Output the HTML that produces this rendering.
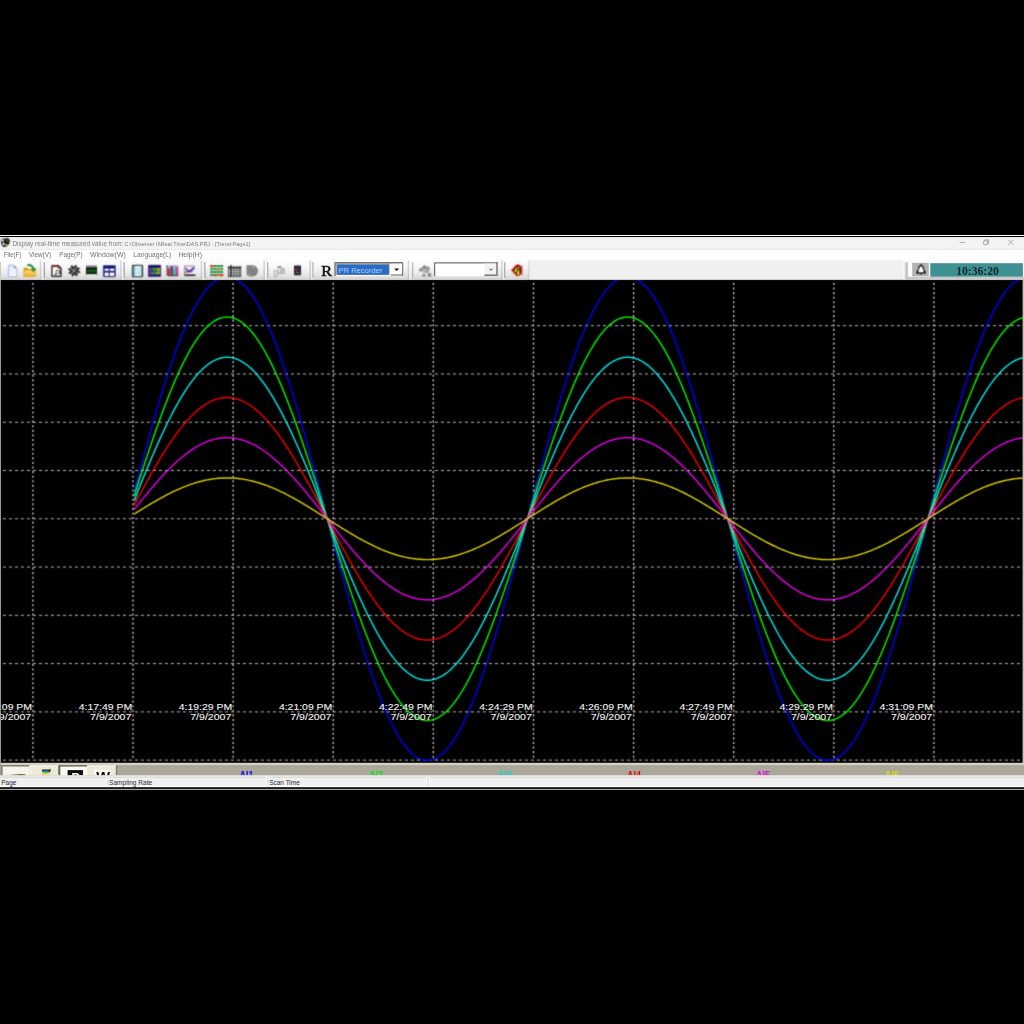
<!DOCTYPE html>
<html><head><meta charset="utf-8"><title>Trend</title>
<style>
html,body{margin:0;padding:0;background:#000;}
body{width:1024px;height:1024px;position:relative;overflow:hidden;font-family:"Liberation Sans",sans-serif;}
svg text{white-space:pre;}
</style></head><body>
<svg width="1024" height="483" viewBox="0 280 1024 483" style="position:absolute;left:0;top:280px;display:block">
<rect x="0" y="280" width="1024" height="483" fill="#000"/>
<defs><filter id="cb" x="0" y="270" width="1024" height="500" filterUnits="userSpaceOnUse"><feConvolveMatrix order="3" kernelMatrix="1 4 1 4 20 4 1 4 1" divisor="40" edgeMode="none" preserveAlpha="false"/></filter><clipPath id="cc"><rect x="0" y="280" width="1024" height="483"/></clipPath></defs>
<g clip-path="url(#cc)"><g filter="url(#cb)">
<g stroke="#c6c6c6" fill="none"><line stroke-width="0.9" x1="2.9" y1="325.70" x2="1024" y2="325.70" stroke-dasharray="3.1 2.9"/><line stroke-width="0.9" x1="2.9" y1="373.97" x2="1024" y2="373.97" stroke-dasharray="3.1 2.9"/><line stroke-width="0.9" x1="2.9" y1="422.24" x2="1024" y2="422.24" stroke-dasharray="3.1 2.9"/><line stroke-width="0.9" x1="2.9" y1="470.51" x2="1024" y2="470.51" stroke-dasharray="3.1 2.9"/><line stroke-width="0.9" x1="2.9" y1="518.78" x2="1024" y2="518.78" stroke-dasharray="3.1 2.9"/><line stroke-width="0.9" x1="2.9" y1="567.05" x2="1024" y2="567.05" stroke-dasharray="3.1 2.9"/><line stroke-width="0.9" x1="2.9" y1="615.32" x2="1024" y2="615.32" stroke-dasharray="3.1 2.9"/><line stroke-width="0.9" x1="2.9" y1="663.59" x2="1024" y2="663.59" stroke-dasharray="3.1 2.9"/><line stroke-width="0.9" x1="2.9" y1="711.86" x2="1024" y2="711.86" stroke-dasharray="3.1 2.9"/><line stroke-width="0.9" x1="2.9" y1="760.13" x2="1024" y2="760.13" stroke-dasharray="3.1 2.9"/><line stroke="#c4c4c4" stroke-width="1.35" x1="32.9" y1="282.9" x2="32.9" y2="758.6" stroke-dasharray="2.1 2.49"/><line stroke="#c4c4c4" stroke-width="1.35" x1="133.0" y1="282.9" x2="133.0" y2="758.6" stroke-dasharray="2.1 2.49"/><line stroke="#c4c4c4" stroke-width="1.35" x1="233.1" y1="282.9" x2="233.1" y2="758.6" stroke-dasharray="2.1 2.49"/><line stroke="#c4c4c4" stroke-width="1.35" x1="333.2" y1="282.9" x2="333.2" y2="758.6" stroke-dasharray="2.1 2.49"/><line stroke="#c4c4c4" stroke-width="1.35" x1="433.3" y1="282.9" x2="433.3" y2="758.6" stroke-dasharray="2.1 2.49"/><line stroke="#c4c4c4" stroke-width="1.35" x1="533.5" y1="282.9" x2="533.5" y2="758.6" stroke-dasharray="2.1 2.49"/><line stroke="#c4c4c4" stroke-width="1.35" x1="633.6" y1="282.9" x2="633.6" y2="758.6" stroke-dasharray="2.1 2.49"/><line stroke="#c4c4c4" stroke-width="1.35" x1="733.7" y1="282.9" x2="733.7" y2="758.6" stroke-dasharray="2.1 2.49"/><line stroke="#c4c4c4" stroke-width="1.35" x1="833.8" y1="282.9" x2="833.8" y2="758.6" stroke-dasharray="2.1 2.49"/><line stroke="#c4c4c4" stroke-width="1.35" x1="933.9" y1="282.9" x2="933.9" y2="758.6" stroke-dasharray="2.1 2.49"/></g>
<polyline fill="none" stroke="#0000f6" stroke-width="1.45" stroke-linejoin="round" points="134.2,491.5 135.2,487.7 136.2,484.0 137.2,480.2 138.2,476.5 139.2,472.7 140.2,469.0 141.2,465.3 142.2,461.6 143.2,457.9 144.2,454.3 145.2,450.6 146.2,447.0 147.2,443.4 148.2,439.8 149.2,436.2 150.2,432.6 151.2,429.1 152.2,425.6 153.2,422.1 154.2,418.6 155.2,415.2 156.2,411.8 157.2,408.4 158.2,405.0 159.2,401.7 160.2,398.4 161.2,395.1 162.2,391.8 163.2,388.6 164.2,385.4 165.2,382.3 166.2,379.2 167.2,376.1 168.2,373.0 169.2,370.0 170.2,367.1 171.2,364.1 172.2,361.2 173.2,358.4 174.2,355.5 175.2,352.8 176.2,350.0 177.2,347.3 178.2,344.7 179.2,342.0 180.2,339.5 181.2,336.9 182.2,334.5 183.2,332.0 184.2,329.6 185.2,327.3 186.2,325.0 187.2,322.8 188.2,320.6 189.2,318.4 190.2,316.3 191.2,314.2 192.2,312.2 193.2,310.3 194.2,308.4 195.2,306.5 196.2,304.8 197.2,303.0 198.2,301.3 199.2,299.7 200.2,298.1 201.2,296.6 202.2,295.1 203.2,293.7 204.2,292.3 205.2,291.0 206.2,289.8 207.2,288.6 208.2,287.4 209.2,286.3 210.2,285.3 211.2,284.4 212.2,283.4 213.2,282.6 214.2,281.8 215.2,281.1 216.2,280.4 217.2,279.8 218.2,279.2 219.2,278.7 220.2,278.3 221.2,277.9 222.2,277.6 223.2,277.3 224.2,277.1 225.2,277.0 226.2,276.9 227.2,276.9 228.2,276.9 229.2,277.0 230.2,277.1 231.2,277.3 232.2,277.6 233.2,278.0 234.2,278.3 235.2,278.8 236.2,279.3 237.2,279.9 238.2,280.5 239.2,281.2 240.2,281.9 241.2,282.7 242.2,283.6 243.2,284.5 244.2,285.5 245.2,286.5 246.2,287.6 247.2,288.8 248.2,290.0 249.2,291.2 250.2,292.5 251.2,293.9 252.2,295.3 253.2,296.8 254.2,298.4 255.2,300.0 256.2,301.6 257.2,303.3 258.2,305.1 259.2,306.9 260.2,308.7 261.2,310.6 262.2,312.6 263.2,314.6 264.2,316.7 265.2,318.8 266.2,320.9 267.2,323.1 268.2,325.4 269.2,327.7 270.2,330.1 271.2,332.5 272.2,334.9 273.2,337.4 274.2,339.9 275.2,342.5 276.2,345.1 277.2,347.8 278.2,350.5 279.2,353.2 280.2,356.0 281.2,358.9 282.2,361.7 283.2,364.6 284.2,367.6 285.2,370.6 286.2,373.6 287.2,376.6 288.2,379.7 289.2,382.8 290.2,386.0 291.2,389.2 292.2,392.4 293.2,395.7 294.2,398.9 295.2,402.3 296.2,405.6 297.2,409.0 298.2,412.4 299.2,415.8 300.2,419.2 301.2,422.7 302.2,426.2 303.2,429.7 304.2,433.2 305.2,436.8 306.2,440.4 307.2,444.0 308.2,447.6 309.2,451.2 310.2,454.9 311.2,458.6 312.2,462.2 313.2,465.9 314.2,469.7 315.2,473.4 316.2,477.1 317.2,480.9 318.2,484.6 319.2,488.4 320.2,492.1 321.2,495.9 322.2,499.7 323.2,503.5 324.2,507.3 325.2,511.1 326.2,514.9 327.2,518.7 328.2,522.5 329.2,526.2 330.2,530.0 331.2,533.8 332.2,537.6 333.2,541.4 334.2,545.2 335.2,548.9 336.2,552.7 337.2,556.5 338.2,560.2 339.2,563.9 340.2,567.7 341.2,571.4 342.2,575.1 343.2,578.7 344.2,582.4 345.2,586.1 346.2,589.7 347.2,593.3 348.2,596.9 349.2,600.5 350.2,604.1 351.2,607.6 352.2,611.1 353.2,614.6 354.2,618.1 355.2,621.6 356.2,625.0 357.2,628.4 358.2,631.7 359.2,635.1 360.2,638.4 361.2,641.7 362.2,644.9 363.2,648.2 364.2,651.3 365.2,654.5 366.2,657.6 367.2,660.7 368.2,663.8 369.2,666.8 370.2,669.8 371.2,672.7 372.2,675.6 373.2,678.5 374.2,681.3 375.2,684.1 376.2,686.9 377.2,689.6 378.2,692.2 379.2,694.9 380.2,697.5 381.2,700.0 382.2,702.5 383.2,704.9 384.2,707.3 385.2,709.7 386.2,712.0 387.2,714.2 388.2,716.5 389.2,718.6 390.2,720.7 391.2,722.8 392.2,724.8 393.2,726.8 394.2,728.7 395.2,730.5 396.2,732.4 397.2,734.1 398.2,735.8 399.2,737.5 400.2,739.1 401.2,740.6 402.2,742.1 403.2,743.5 404.2,744.9 405.2,746.2 406.2,747.5 407.2,748.7 408.2,749.8 409.2,750.9 410.2,752.0 411.2,752.9 412.2,753.9 413.2,754.7 414.2,755.5 415.2,756.3 416.2,757.0 417.2,757.6 418.2,758.2 419.2,758.7 420.2,759.1 421.2,759.5 422.2,759.9 423.2,760.0 424.2,760.0 425.2,760.0 426.2,760.0 427.2,760.0 428.2,760.0 429.2,760.0 430.2,760.0 431.2,760.0 432.2,759.9 433.2,759.6 434.2,759.2 435.2,758.8 436.2,758.3 437.2,757.8 438.2,757.1 439.2,756.5 440.2,755.7 441.2,755.0 442.2,754.1 443.2,753.2 444.2,752.2 445.2,751.2 446.2,750.1 447.2,749.0 448.2,747.8 449.2,746.6 450.2,745.3 451.2,743.9 452.2,742.5 453.2,741.0 454.2,739.5 455.2,737.9 456.2,736.3 457.2,734.6 458.2,732.8 459.2,731.0 460.2,729.2 461.2,727.3 462.2,725.4 463.2,723.4 464.2,721.3 465.2,719.2 466.2,717.1 467.2,714.9 468.2,712.6 469.2,710.3 470.2,708.0 471.2,705.6 472.2,703.2 473.2,700.7 474.2,698.2 475.2,695.6 476.2,693.0 477.2,690.3 478.2,687.6 479.2,684.9 480.2,682.1 481.2,679.3 482.2,676.4 483.2,673.5 484.2,670.6 485.2,667.6 486.2,664.6 487.2,661.6 488.2,658.5 489.2,655.4 490.2,652.2 491.2,649.0 492.2,645.8 493.2,642.6 494.2,639.3 495.2,636.0 496.2,632.7 497.2,629.3 498.2,625.9 499.2,622.5 500.2,619.1 501.2,615.6 502.2,612.1 503.2,608.6 504.2,605.1 505.2,601.5 506.2,597.9 507.2,594.3 508.2,590.7 509.2,587.1 510.2,583.4 511.2,579.8 512.2,576.1 513.2,572.4 514.2,568.7 515.2,565.0 516.2,561.2 517.2,557.5 518.2,553.7 519.2,550.0 520.2,546.2 521.2,542.4 522.2,538.7 523.2,534.9 524.2,531.1 525.2,527.3 526.2,523.5 527.2,519.7 528.2,515.9 529.2,512.1 530.2,508.3 531.2,504.5 532.2,500.7 533.2,497.0 534.2,493.2 535.2,489.4 536.2,485.6 537.2,481.9 538.2,478.1 539.2,474.4 540.2,470.7 541.2,467.0 542.2,463.3 543.2,459.6 544.2,455.9 545.2,452.2 546.2,448.6 547.2,445.0 548.2,441.4 549.2,437.8 550.2,434.2 551.2,430.7 552.2,427.2 553.2,423.7 554.2,420.2 555.2,416.7 556.2,413.3 557.2,409.9 558.2,406.5 559.2,403.2 560.2,399.8 561.2,396.6 562.2,393.3 563.2,390.1 564.2,386.9 565.2,383.7 566.2,380.6 567.2,377.5 568.2,374.4 569.2,371.4 570.2,368.4 571.2,365.4 572.2,362.5 573.2,359.6 574.2,356.8 575.2,354.0 576.2,351.2 577.2,348.5 578.2,345.8 579.2,343.2 580.2,340.6 581.2,338.1 582.2,335.6 583.2,333.1 584.2,330.7 585.2,328.3 586.2,326.0 587.2,323.8 588.2,321.5 589.2,319.4 590.2,317.2 591.2,315.2 592.2,313.1 593.2,311.2 594.2,309.2 595.2,307.4 596.2,305.6 597.2,303.8 598.2,302.1 599.2,300.4 600.2,298.8 601.2,297.3 602.2,295.8 603.2,294.3 604.2,292.9 605.2,291.6 606.2,290.3 607.2,289.1 608.2,287.9 609.2,286.8 610.2,285.8 611.2,284.8 612.2,283.8 613.2,283.0 614.2,282.1 615.2,281.4 616.2,280.7 617.2,280.0 618.2,279.5 619.2,278.9 620.2,278.5 621.2,278.1 622.2,277.7 623.2,277.4 624.2,277.2 625.2,277.0 626.2,276.9 627.2,276.9 628.2,276.9 629.2,276.9 630.2,277.1 631.2,277.2 632.2,277.5 633.2,277.8 634.2,278.2 635.2,278.6 636.2,279.1 637.2,279.6 638.2,280.2 639.2,280.9 640.2,281.6 641.2,282.4 642.2,283.2 643.2,284.1 644.2,285.0 645.2,286.1 646.2,287.1 647.2,288.2 648.2,289.4 649.2,290.7 650.2,291.9 651.2,293.3 652.2,294.7 653.2,296.2 654.2,297.7 655.2,299.2 656.2,300.9 657.2,302.5 658.2,304.3 659.2,306.0 660.2,307.9 661.2,309.8 662.2,311.7 663.2,313.7 664.2,315.7 665.2,317.8 666.2,320.0 667.2,322.1 668.2,324.4 669.2,326.7 670.2,329.0 671.2,331.4 672.2,333.8 673.2,336.3 674.2,338.8 675.2,341.3 676.2,343.9 677.2,346.6 678.2,349.3 679.2,352.0 680.2,354.8 681.2,357.6 682.2,360.4 683.2,363.3 684.2,366.2 685.2,369.2 686.2,372.2 687.2,375.2 688.2,378.3 689.2,381.4 690.2,384.6 691.2,387.7 692.2,391.0 693.2,394.2 694.2,397.5 695.2,400.8 696.2,404.1 697.2,407.4 698.2,410.8 699.2,414.2 700.2,417.7 701.2,421.1 702.2,424.6 703.2,428.1 704.2,431.7 705.2,435.2 706.2,438.8 707.2,442.4 708.2,446.0 709.2,449.6 710.2,453.3 711.2,456.9 712.2,460.6 713.2,464.3 714.2,468.0 715.2,471.7 716.2,475.4 717.2,479.2 718.2,482.9 719.2,486.7 720.2,490.4 721.2,494.2 722.2,498.0 723.2,501.8 724.2,505.6 725.2,509.4 726.2,513.2 727.2,516.9 728.2,520.7 729.2,524.5 730.2,528.3 731.2,532.1 732.2,535.9 733.2,539.7 734.2,543.5 735.2,547.2 736.2,551.0 737.2,554.8 738.2,558.5 739.2,562.3 740.2,566.0 741.2,569.7 742.2,573.4 743.2,577.1 744.2,580.8 745.2,584.4 746.2,588.1 747.2,591.7 748.2,595.3 749.2,598.9 750.2,602.5 751.2,606.0 752.2,609.6 753.2,613.1 754.2,616.5 755.2,620.0 756.2,623.4 757.2,626.8 758.2,630.2 759.2,633.6 760.2,636.9 761.2,640.2 762.2,643.5 763.2,646.7 764.2,649.9 765.2,653.1 766.2,656.2 767.2,659.3 768.2,662.4 769.2,665.4 770.2,668.4 771.2,671.4 772.2,674.3 773.2,677.2 774.2,680.1 775.2,682.9 776.2,685.6 777.2,688.4 778.2,691.1 779.2,693.7 780.2,696.3 781.2,698.9 782.2,701.4 783.2,703.8 784.2,706.2 785.2,708.6 786.2,711.0 787.2,713.2 788.2,715.5 789.2,717.7 790.2,719.8 791.2,721.9 792.2,723.9 793.2,725.9 794.2,727.8 795.2,729.7 796.2,731.5 797.2,733.3 798.2,735.0 799.2,736.7 800.2,738.3 801.2,739.9 802.2,741.4 803.2,742.9 804.2,744.3 805.2,745.6 806.2,746.9 807.2,748.1 808.2,749.3 809.2,750.4 810.2,751.5 811.2,752.5 812.2,753.5 813.2,754.3 814.2,755.2 815.2,755.9 816.2,756.7 817.2,757.3 818.2,757.9 819.2,758.5 820.2,758.9 821.2,759.4 822.2,759.7 823.2,760.0 824.2,760.0 825.2,760.0 826.2,760.0 827.2,760.0 828.2,760.0 829.2,760.0 830.2,760.0 831.2,760.0 832.2,760.0 833.2,759.8 834.2,759.4 835.2,759.0 836.2,758.5 837.2,758.0 838.2,757.4 839.2,756.8 840.2,756.1 841.2,755.3 842.2,754.5 843.2,753.6 844.2,752.7 845.2,751.7 846.2,750.6 847.2,749.5 848.2,748.3 849.2,747.1 850.2,745.8 851.2,744.5 852.2,743.1 853.2,741.7 854.2,740.2 855.2,738.6 856.2,737.0 857.2,735.3 858.2,733.6 859.2,731.9 860.2,730.0 861.2,728.2 862.2,726.2 863.2,724.3 864.2,722.2 865.2,720.2 866.2,718.0 867.2,715.9 868.2,713.6 869.2,711.4 870.2,709.0 871.2,706.7 872.2,704.3 873.2,701.8 874.2,699.3 875.2,696.7 876.2,694.2 877.2,691.5 878.2,688.8 879.2,686.1 880.2,683.4 881.2,680.6 882.2,677.7 883.2,674.8 884.2,671.9 885.2,669.0 886.2,666.0 887.2,662.9 888.2,659.9 889.2,656.8 890.2,653.6 891.2,650.5 892.2,647.3 893.2,644.0 894.2,640.8 895.2,637.5 896.2,634.2 897.2,630.8 898.2,627.4 899.2,624.0 900.2,620.6 901.2,617.2 902.2,613.7 903.2,610.2 904.2,606.6 905.2,603.1 906.2,599.5 907.2,595.9 908.2,592.3 909.2,588.7 910.2,585.1 911.2,581.4 912.2,577.7 913.2,574.1 914.2,570.3 915.2,566.6 916.2,562.9 917.2,559.2 918.2,555.4 919.2,551.7 920.2,547.9 921.2,544.1 922.2,540.4 923.2,536.6 924.2,532.8 925.2,529.0 926.2,525.2 927.2,521.4 928.2,517.6 929.2,513.8 930.2,510.0 931.2,506.2 932.2,502.4 933.2,498.7 934.2,494.9 935.2,491.1 936.2,487.3 937.2,483.6 938.2,479.8 939.2,476.1 940.2,472.4 941.2,468.6 942.2,464.9 943.2,461.2 944.2,457.6 945.2,453.9 946.2,450.2 947.2,446.6 948.2,443.0 949.2,439.4 950.2,435.8 951.2,432.3 952.2,428.7 953.2,425.2 954.2,421.7 955.2,418.3 956.2,414.8 957.2,411.4 958.2,408.0 959.2,404.7 960.2,401.3 961.2,398.0 962.2,394.8 963.2,391.5 964.2,388.3 965.2,385.1 966.2,382.0 967.2,378.9 968.2,375.8 969.2,372.7 970.2,369.7 971.2,366.8 972.2,363.8 973.2,360.9 974.2,358.1 975.2,355.3 976.2,352.5 977.2,349.7 978.2,347.0 979.2,344.4 980.2,341.8 981.2,339.2 982.2,336.7 983.2,334.2 984.2,331.8 985.2,329.4 986.2,327.1 987.2,324.8 988.2,322.5 989.2,320.3 990.2,318.2 991.2,316.1 992.2,314.0 993.2,312.0 994.2,310.1 995.2,308.2 996.2,306.4 997.2,304.6 998.2,302.8 999.2,301.2 1000.2,299.5 1001.2,297.9 1002.2,296.4 1003.2,295.0 1004.2,293.5 1005.2,292.2 1006.2,290.9 1007.2,289.6 1008.2,288.4 1009.2,287.3 1010.2,286.2 1011.2,285.2 1012.2,284.3 1013.2,283.4 1014.2,282.5 1015.2,281.7 1016.2,281.0 1017.2,280.3 1018.2,279.7 1019.2,279.2 1020.2,278.7 1021.2,278.2 1022.2,277.9 1023.2,277.5 1024.2,277.3"/>
<polyline fill="none" stroke="#00f400" stroke-width="1.45" stroke-linejoin="round" points="134.2,496.0 135.2,492.9 136.2,489.7 137.2,486.6 138.2,483.5 139.2,480.4 140.2,477.3 141.2,474.2 142.2,471.1 143.2,468.0 144.2,465.0 145.2,461.9 146.2,458.9 147.2,455.9 148.2,452.9 149.2,449.9 150.2,446.9 151.2,444.0 152.2,441.1 153.2,438.1 154.2,435.2 155.2,432.4 156.2,429.5 157.2,426.7 158.2,423.9 159.2,421.1 160.2,418.4 161.2,415.6 162.2,412.9 163.2,410.2 164.2,407.6 165.2,405.0 166.2,402.4 167.2,399.8 168.2,397.2 169.2,394.7 170.2,392.2 171.2,389.8 172.2,387.4 173.2,385.0 174.2,382.6 175.2,380.3 176.2,378.0 177.2,375.8 178.2,373.6 179.2,371.4 180.2,369.2 181.2,367.1 182.2,365.1 183.2,363.0 184.2,361.0 185.2,359.1 186.2,357.2 187.2,355.3 188.2,353.5 189.2,351.7 190.2,349.9 191.2,348.2 192.2,346.5 193.2,344.9 194.2,343.3 195.2,341.8 196.2,340.3 197.2,338.8 198.2,337.4 199.2,336.1 200.2,334.7 201.2,333.5 202.2,332.2 203.2,331.1 204.2,329.9 205.2,328.8 206.2,327.8 207.2,326.8 208.2,325.8 209.2,324.9 210.2,324.1 211.2,323.3 212.2,322.5 213.2,321.8 214.2,321.2 215.2,320.5 216.2,320.0 217.2,319.5 218.2,319.0 219.2,318.6 220.2,318.2 221.2,317.9 222.2,317.6 223.2,317.4 224.2,317.2 225.2,317.1 226.2,317.0 227.2,317.0 228.2,317.1 229.2,317.1 230.2,317.3 231.2,317.4 232.2,317.7 233.2,317.9 234.2,318.3 235.2,318.6 236.2,319.1 237.2,319.5 238.2,320.1 239.2,320.6 240.2,321.3 241.2,321.9 242.2,322.7 243.2,323.4 244.2,324.2 245.2,325.1 246.2,326.0 247.2,327.0 248.2,328.0 249.2,329.0 250.2,330.1 251.2,331.3 252.2,332.5 253.2,333.7 254.2,335.0 255.2,336.3 256.2,337.7 257.2,339.1 258.2,340.6 259.2,342.1 260.2,343.6 261.2,345.2 262.2,346.8 263.2,348.5 264.2,350.2 265.2,352.0 266.2,353.8 267.2,355.6 268.2,357.5 269.2,359.4 270.2,361.4 271.2,363.4 272.2,365.4 273.2,367.5 274.2,369.6 275.2,371.8 276.2,374.0 277.2,376.2 278.2,378.4 279.2,380.7 280.2,383.1 281.2,385.4 282.2,387.8 283.2,390.2 284.2,392.7 285.2,395.2 286.2,397.7 287.2,400.2 288.2,402.8 289.2,405.4 290.2,408.0 291.2,410.7 292.2,413.4 293.2,416.1 294.2,418.8 295.2,421.6 296.2,424.4 297.2,427.2 298.2,430.0 299.2,432.9 300.2,435.8 301.2,438.6 302.2,441.6 303.2,444.5 304.2,447.4 305.2,450.4 306.2,453.4 307.2,456.4 308.2,459.4 309.2,462.5 310.2,465.5 311.2,468.6 312.2,471.6 313.2,474.7 314.2,477.8 315.2,480.9 316.2,484.0 317.2,487.2 318.2,490.3 319.2,493.4 320.2,496.6 321.2,499.7 322.2,502.9 323.2,506.0 324.2,509.2 325.2,512.3 326.2,515.5 327.2,518.7 328.2,521.8 329.2,525.0 330.2,528.2 331.2,531.3 332.2,534.5 333.2,537.6 334.2,540.8 335.2,543.9 336.2,547.1 337.2,550.2 338.2,553.3 339.2,556.4 340.2,559.5 341.2,562.6 342.2,565.7 343.2,568.8 344.2,571.8 345.2,574.9 346.2,577.9 347.2,580.9 348.2,583.9 349.2,586.9 350.2,589.9 351.2,592.9 352.2,595.8 353.2,598.7 354.2,601.6 355.2,604.5 356.2,607.3 357.2,610.2 358.2,613.0 359.2,615.8 360.2,618.5 361.2,621.3 362.2,624.0 363.2,626.7 364.2,629.3 365.2,632.0 366.2,634.6 367.2,637.1 368.2,639.7 369.2,642.2 370.2,644.7 371.2,647.2 372.2,649.6 373.2,652.0 374.2,654.3 375.2,656.7 376.2,659.0 377.2,661.2 378.2,663.4 379.2,665.6 380.2,667.8 381.2,669.9 382.2,672.0 383.2,674.0 384.2,676.0 385.2,678.0 386.2,679.9 387.2,681.8 388.2,683.6 389.2,685.4 390.2,687.2 391.2,688.9 392.2,690.6 393.2,692.2 394.2,693.8 395.2,695.4 396.2,696.9 397.2,698.3 398.2,699.8 399.2,701.1 400.2,702.5 401.2,703.7 402.2,705.0 403.2,706.2 404.2,707.3 405.2,708.4 406.2,709.5 407.2,710.5 408.2,711.4 409.2,712.4 410.2,713.2 411.2,714.0 412.2,714.8 413.2,715.5 414.2,716.2 415.2,716.8 416.2,717.4 417.2,717.9 418.2,718.4 419.2,718.8 420.2,719.2 421.2,719.5 422.2,719.8 423.2,720.1 424.2,720.2 425.2,720.4 426.2,720.4 427.2,720.5 428.2,720.5 429.2,720.4 430.2,720.3 431.2,720.1 432.2,719.9 433.2,719.6 434.2,719.3 435.2,718.9 436.2,718.5 437.2,718.1 438.2,717.6 439.2,717.0 440.2,716.4 441.2,715.7 442.2,715.0 443.2,714.3 444.2,713.5 445.2,712.6 446.2,711.7 447.2,710.8 448.2,709.8 449.2,708.7 450.2,707.6 451.2,706.5 452.2,705.3 453.2,704.1 454.2,702.8 455.2,701.5 456.2,700.1 457.2,698.7 458.2,697.3 459.2,695.8 460.2,694.2 461.2,692.7 462.2,691.0 463.2,689.4 464.2,687.7 465.2,685.9 466.2,684.1 467.2,682.3 468.2,680.4 469.2,678.5 470.2,676.5 471.2,674.6 472.2,672.5 473.2,670.5 474.2,668.4 475.2,666.2 476.2,664.0 477.2,661.8 478.2,659.6 479.2,657.3 480.2,655.0 481.2,652.6 482.2,650.2 483.2,647.8 484.2,645.4 485.2,642.9 486.2,640.4 487.2,637.8 488.2,635.3 489.2,632.7 490.2,630.1 491.2,627.4 492.2,624.7 493.2,622.0 494.2,619.3 495.2,616.5 496.2,613.7 497.2,610.9 498.2,608.1 499.2,605.3 500.2,602.4 501.2,599.5 502.2,596.6 503.2,593.7 504.2,590.7 505.2,587.8 506.2,584.8 507.2,581.8 508.2,578.8 509.2,575.7 510.2,572.7 511.2,569.6 512.2,566.6 513.2,563.5 514.2,560.4 515.2,557.3 516.2,554.2 517.2,551.1 518.2,547.9 519.2,544.8 520.2,541.6 521.2,538.5 522.2,535.3 523.2,532.2 524.2,529.0 525.2,525.9 526.2,522.7 527.2,519.5 528.2,516.4 529.2,513.2 530.2,510.0 531.2,506.9 532.2,503.7 533.2,500.6 534.2,497.4 535.2,494.3 536.2,491.1 537.2,488.0 538.2,484.9 539.2,481.8 540.2,478.7 541.2,475.6 542.2,472.5 543.2,469.4 544.2,466.3 545.2,463.3 546.2,460.3 547.2,457.2 548.2,454.2 549.2,451.2 550.2,448.3 551.2,445.3 552.2,442.4 553.2,439.4 554.2,436.5 555.2,433.7 556.2,430.8 557.2,428.0 558.2,425.2 559.2,422.4 560.2,419.6 561.2,416.8 562.2,414.1 563.2,411.4 564.2,408.8 565.2,406.1 566.2,403.5 567.2,400.9 568.2,398.4 569.2,395.9 570.2,393.4 571.2,390.9 572.2,388.5 573.2,386.1 574.2,383.7 575.2,381.4 576.2,379.1 577.2,376.8 578.2,374.6 579.2,372.4 580.2,370.2 581.2,368.1 582.2,366.0 583.2,364.0 584.2,361.9 585.2,360.0 586.2,358.0 587.2,356.1 588.2,354.3 589.2,352.5 590.2,350.7 591.2,349.0 592.2,347.3 593.2,345.6 594.2,344.0 595.2,342.5 596.2,341.0 597.2,339.5 598.2,338.1 599.2,336.7 600.2,335.3 601.2,334.0 602.2,332.8 603.2,331.6 604.2,330.4 605.2,329.3 606.2,328.3 607.2,327.2 608.2,326.3 609.2,325.3 610.2,324.5 611.2,323.6 612.2,322.9 613.2,322.1 614.2,321.4 615.2,320.8 616.2,320.2 617.2,319.7 618.2,319.2 619.2,318.8 620.2,318.4 621.2,318.0 622.2,317.7 623.2,317.5 624.2,317.3 625.2,317.2 626.2,317.1 627.2,317.0 628.2,317.0 629.2,317.1 630.2,317.2 631.2,317.4 632.2,317.6 633.2,317.8 634.2,318.1 635.2,318.5 636.2,318.9 637.2,319.3 638.2,319.8 639.2,320.4 640.2,321.0 641.2,321.6 642.2,322.3 643.2,323.1 644.2,323.9 645.2,324.7 646.2,325.6 647.2,326.5 648.2,327.5 649.2,328.5 650.2,329.6 651.2,330.7 652.2,331.9 653.2,333.1 654.2,334.4 655.2,335.7 656.2,337.0 657.2,338.4 658.2,339.9 659.2,341.4 660.2,342.9 661.2,344.5 662.2,346.1 663.2,347.7 664.2,349.4 665.2,351.2 666.2,353.0 667.2,354.8 668.2,356.7 669.2,358.6 670.2,360.5 671.2,362.5 672.2,364.5 673.2,366.6 674.2,368.7 675.2,370.8 676.2,373.0 677.2,375.2 678.2,377.4 679.2,379.7 680.2,382.0 681.2,384.3 682.2,386.7 683.2,389.1 684.2,391.6 685.2,394.0 686.2,396.5 687.2,399.1 688.2,401.6 689.2,404.2 690.2,406.9 691.2,409.5 692.2,412.2 693.2,414.9 694.2,417.6 695.2,420.4 696.2,423.1 697.2,425.9 698.2,428.7 699.2,431.6 700.2,434.5 701.2,437.3 702.2,440.2 703.2,443.2 704.2,446.1 705.2,449.1 706.2,452.1 707.2,455.1 708.2,458.1 709.2,461.1 710.2,464.1 711.2,467.2 712.2,470.2 713.2,473.3 714.2,476.4 715.2,479.5 716.2,482.6 717.2,485.7 718.2,488.9 719.2,492.0 720.2,495.1 721.2,498.3 722.2,501.4 723.2,504.6 724.2,507.8 725.2,510.9 726.2,514.1 727.2,517.2 728.2,520.4 729.2,523.6 730.2,526.7 731.2,529.9 732.2,533.1 733.2,536.2 734.2,539.4 735.2,542.5 736.2,545.7 737.2,548.8 738.2,551.9 739.2,555.0 740.2,558.1 741.2,561.2 742.2,564.3 743.2,567.4 744.2,570.5 745.2,573.5 746.2,576.6 747.2,579.6 748.2,582.6 749.2,585.6 750.2,588.6 751.2,591.5 752.2,594.5 753.2,597.4 754.2,600.3 755.2,603.2 756.2,606.1 757.2,608.9 758.2,611.7 759.2,614.5 760.2,617.3 761.2,620.0 762.2,622.8 763.2,625.5 764.2,628.1 765.2,630.8 766.2,633.4 767.2,636.0 768.2,638.5 769.2,641.1 770.2,643.6 771.2,646.1 772.2,648.5 773.2,650.9 774.2,653.3 775.2,655.6 776.2,657.9 777.2,660.2 778.2,662.4 779.2,664.6 780.2,666.8 781.2,668.9 782.2,671.0 783.2,673.1 784.2,675.1 785.2,677.1 786.2,679.0 787.2,680.9 788.2,682.8 789.2,684.6 790.2,686.4 791.2,688.1 792.2,689.8 793.2,691.5 794.2,693.1 795.2,694.7 796.2,696.2 797.2,697.7 798.2,699.1 799.2,700.5 800.2,701.9 801.2,703.2 802.2,704.4 803.2,705.6 804.2,706.8 805.2,707.9 806.2,709.0 807.2,710.0 808.2,711.0 809.2,712.0 810.2,712.8 811.2,713.7 812.2,714.5 813.2,715.2 814.2,715.9 815.2,716.6 816.2,717.2 817.2,717.7 818.2,718.2 819.2,718.6 820.2,719.0 821.2,719.4 822.2,719.7 823.2,720.0 824.2,720.2 825.2,720.3 826.2,720.4 827.2,720.5 828.2,720.5 829.2,720.4 830.2,720.3 831.2,720.2 832.2,720.0 833.2,719.7 834.2,719.5 835.2,719.1 836.2,718.7 837.2,718.3 838.2,717.8 839.2,717.2 840.2,716.7 841.2,716.0 842.2,715.3 843.2,714.6 844.2,713.8 845.2,713.0 846.2,712.1 847.2,711.2 848.2,710.2 849.2,709.2 850.2,708.1 851.2,707.0 852.2,705.9 853.2,704.7 854.2,703.4 855.2,702.1 856.2,700.8 857.2,699.4 858.2,697.9 859.2,696.5 860.2,694.9 861.2,693.4 862.2,691.8 863.2,690.1 864.2,688.4 865.2,686.7 866.2,684.9 867.2,683.1 868.2,681.3 869.2,679.4 870.2,677.4 871.2,675.5 872.2,673.4 873.2,671.4 874.2,669.3 875.2,667.2 876.2,665.0 877.2,662.8 878.2,660.6 879.2,658.3 880.2,656.0 881.2,653.7 882.2,651.3 883.2,648.9 884.2,646.5 885.2,644.0 886.2,641.5 887.2,639.0 888.2,636.4 889.2,633.9 890.2,631.2 891.2,628.6 892.2,625.9 893.2,623.2 894.2,620.5 895.2,617.8 896.2,615.0 897.2,612.2 898.2,609.4 899.2,606.6 900.2,603.7 901.2,600.8 902.2,597.9 903.2,595.0 904.2,592.0 905.2,589.1 906.2,586.1 907.2,583.1 908.2,580.1 909.2,577.1 910.2,574.1 911.2,571.0 912.2,567.9 913.2,564.9 914.2,561.8 915.2,558.7 916.2,555.6 917.2,552.5 918.2,549.3 919.2,546.2 920.2,543.1 921.2,539.9 922.2,536.8 923.2,533.6 924.2,530.5 925.2,527.3 926.2,524.1 927.2,521.0 928.2,517.8 929.2,514.6 930.2,511.5 931.2,508.3 932.2,505.2 933.2,502.0 934.2,498.8 935.2,495.7 936.2,492.6 937.2,489.4 938.2,486.3 939.2,483.2 940.2,480.1 941.2,477.0 942.2,473.9 943.2,470.8 944.2,467.7 945.2,464.7 946.2,461.6 947.2,458.6 948.2,455.6 949.2,452.6 950.2,449.6 951.2,446.6 952.2,443.7 953.2,440.8 954.2,437.8 955.2,435.0 956.2,432.1 957.2,429.2 958.2,426.4 959.2,423.6 960.2,420.8 961.2,418.1 962.2,415.4 963.2,412.6 964.2,410.0 965.2,407.3 966.2,404.7 967.2,402.1 968.2,399.5 969.2,397.0 970.2,394.5 971.2,392.0 972.2,389.6 973.2,387.1 974.2,384.8 975.2,382.4 976.2,380.1 977.2,377.8 978.2,375.6 979.2,373.4 980.2,371.2 981.2,369.0 982.2,366.9 983.2,364.9 984.2,362.8 985.2,360.9 986.2,358.9 987.2,357.0 988.2,355.1 989.2,353.3 990.2,351.5 991.2,349.7 992.2,348.0 993.2,346.4 994.2,344.8 995.2,343.2 996.2,341.6 997.2,340.1 998.2,338.7 999.2,337.3 1000.2,335.9 1001.2,334.6 1002.2,333.3 1003.2,332.1 1004.2,330.9 1005.2,329.8 1006.2,328.7 1007.2,327.7 1008.2,326.7 1009.2,325.7 1010.2,324.9 1011.2,324.0 1012.2,323.2 1013.2,322.4 1014.2,321.7 1015.2,321.1 1016.2,320.5 1017.2,319.9 1018.2,319.4 1019.2,319.0 1020.2,318.5 1021.2,318.2 1022.2,317.9 1023.2,317.6 1024.2,317.4"/>
<polyline fill="none" stroke="#00e8e8" stroke-width="1.45" stroke-linejoin="round" points="134.2,500.5 135.2,498.0 136.2,495.5 137.2,493.0 138.2,490.5 139.2,488.0 140.2,485.5 141.2,483.1 142.2,480.6 143.2,478.1 144.2,475.7 145.2,473.3 146.2,470.8 147.2,468.4 148.2,466.0 149.2,463.6 150.2,461.3 151.2,458.9 152.2,456.5 153.2,454.2 154.2,451.9 155.2,449.6 156.2,447.3 157.2,445.1 158.2,442.8 159.2,440.6 160.2,438.4 161.2,436.2 162.2,434.0 163.2,431.9 164.2,429.7 165.2,427.6 166.2,425.6 167.2,423.5 168.2,421.5 169.2,419.5 170.2,417.5 171.2,415.5 172.2,413.6 173.2,411.7 174.2,409.8 175.2,407.9 176.2,406.1 177.2,404.3 178.2,402.5 179.2,400.8 180.2,399.1 181.2,397.4 182.2,395.7 183.2,394.1 184.2,392.5 185.2,390.9 186.2,389.4 187.2,387.9 188.2,386.4 189.2,385.0 190.2,383.6 191.2,382.2 192.2,380.9 193.2,379.6 194.2,378.3 195.2,377.1 196.2,375.9 197.2,374.7 198.2,373.6 199.2,372.5 200.2,371.4 201.2,370.4 202.2,369.4 203.2,368.5 204.2,367.6 205.2,366.7 206.2,365.9 207.2,365.1 208.2,364.3 209.2,363.6 210.2,362.9 211.2,362.3 212.2,361.7 213.2,361.1 214.2,360.6 215.2,360.1 216.2,359.6 217.2,359.2 218.2,358.8 219.2,358.5 220.2,358.2 221.2,357.9 222.2,357.7 223.2,357.6 224.2,357.4 225.2,357.3 226.2,357.3 227.2,357.3 228.2,357.3 229.2,357.3 230.2,357.4 231.2,357.6 232.2,357.8 233.2,358.0 234.2,358.2 235.2,358.5 236.2,358.9 237.2,359.3 238.2,359.7 239.2,360.1 240.2,360.6 241.2,361.2 242.2,361.8 243.2,362.4 244.2,363.0 245.2,363.7 246.2,364.4 247.2,365.2 248.2,366.0 249.2,366.9 250.2,367.7 251.2,368.6 252.2,369.6 253.2,370.6 254.2,371.6 255.2,372.7 256.2,373.8 257.2,374.9 258.2,376.1 259.2,377.3 260.2,378.5 261.2,379.8 262.2,381.1 263.2,382.5 264.2,383.8 265.2,385.2 266.2,386.7 267.2,388.2 268.2,389.7 269.2,391.2 270.2,392.8 271.2,394.4 272.2,396.0 273.2,397.7 274.2,399.4 275.2,401.1 276.2,402.8 277.2,404.6 278.2,406.4 279.2,408.2 280.2,410.1 281.2,412.0 282.2,413.9 283.2,415.9 284.2,417.8 285.2,419.8 286.2,421.8 287.2,423.9 288.2,425.9 289.2,428.0 290.2,430.1 291.2,432.2 292.2,434.4 293.2,436.6 294.2,438.8 295.2,441.0 296.2,443.2 297.2,445.5 298.2,447.7 299.2,450.0 300.2,452.3 301.2,454.6 302.2,457.0 303.2,459.3 304.2,461.7 305.2,464.0 306.2,466.4 307.2,468.8 308.2,471.3 309.2,473.7 310.2,476.1 311.2,478.6 312.2,481.0 313.2,483.5 314.2,486.0 315.2,488.5 316.2,491.0 317.2,493.5 318.2,496.0 319.2,498.5 320.2,501.0 321.2,503.5 322.2,506.0 323.2,508.6 324.2,511.1 325.2,513.6 326.2,516.2 327.2,518.7 328.2,521.2 329.2,523.8 330.2,526.3 331.2,528.8 332.2,531.3 333.2,533.9 334.2,536.4 335.2,538.9 336.2,541.4 337.2,543.9 338.2,546.4 339.2,548.9 340.2,551.4 341.2,553.9 342.2,556.3 343.2,558.8 344.2,561.3 345.2,563.7 346.2,566.1 347.2,568.5 348.2,570.9 349.2,573.3 350.2,575.7 351.2,578.1 352.2,580.4 353.2,582.8 354.2,585.1 355.2,587.4 356.2,589.7 357.2,591.9 358.2,594.2 359.2,596.4 360.2,598.6 361.2,600.8 362.2,603.0 363.2,605.1 364.2,607.3 365.2,609.4 366.2,611.5 367.2,613.5 368.2,615.6 369.2,617.6 370.2,619.6 371.2,621.5 372.2,623.5 373.2,625.4 374.2,627.3 375.2,629.2 376.2,631.0 377.2,632.8 378.2,634.6 379.2,636.3 380.2,638.1 381.2,639.7 382.2,641.4 383.2,643.0 384.2,644.6 385.2,646.2 386.2,647.8 387.2,649.3 388.2,650.7 389.2,652.2 390.2,653.6 391.2,655.0 392.2,656.3 393.2,657.6 394.2,658.9 395.2,660.1 396.2,661.4 397.2,662.5 398.2,663.7 399.2,664.8 400.2,665.8 401.2,666.9 402.2,667.9 403.2,668.8 404.2,669.7 405.2,670.6 406.2,671.4 407.2,672.3 408.2,673.0 409.2,673.8 410.2,674.4 411.2,675.1 412.2,675.7 413.2,676.3 414.2,676.8 415.2,677.3 416.2,677.8 417.2,678.2 418.2,678.6 419.2,678.9 420.2,679.2 421.2,679.5 422.2,679.7 423.2,679.9 424.2,680.1 425.2,680.2 426.2,680.2 427.2,680.2 428.2,680.2 429.2,680.2 430.2,680.1 431.2,680.0 432.2,679.8 433.2,679.6 434.2,679.3 435.2,679.0 436.2,678.7 437.2,678.3 438.2,677.9 439.2,677.5 440.2,677.0 441.2,676.4 442.2,675.9 443.2,675.3 444.2,674.6 445.2,673.9 446.2,673.2 447.2,672.5 448.2,671.7 449.2,670.8 450.2,670.0 451.2,669.1 452.2,668.1 453.2,667.1 454.2,666.1 455.2,665.1 456.2,664.0 457.2,662.8 458.2,661.7 459.2,660.5 460.2,659.3 461.2,658.0 462.2,656.7 463.2,655.4 464.2,654.0 465.2,652.6 466.2,651.1 467.2,649.7 468.2,648.2 469.2,646.6 470.2,645.1 471.2,643.5 472.2,641.9 473.2,640.2 474.2,638.5 475.2,636.8 476.2,635.1 477.2,633.3 478.2,631.5 479.2,629.7 480.2,627.8 481.2,625.9 482.2,624.0 483.2,622.1 484.2,620.1 485.2,618.1 486.2,616.1 487.2,614.1 488.2,612.0 489.2,610.0 490.2,607.9 491.2,605.7 492.2,603.6 493.2,601.4 494.2,599.2 495.2,597.0 496.2,594.8 497.2,592.6 498.2,590.3 499.2,588.0 500.2,585.7 501.2,583.4 502.2,581.1 503.2,578.7 504.2,576.4 505.2,574.0 506.2,571.6 507.2,569.2 508.2,566.8 509.2,564.4 510.2,561.9 511.2,559.5 512.2,557.0 513.2,554.6 514.2,552.1 515.2,549.6 516.2,547.1 517.2,544.6 518.2,542.1 519.2,539.6 520.2,537.1 521.2,534.6 522.2,532.0 523.2,529.5 524.2,527.0 525.2,524.5 526.2,521.9 527.2,519.4 528.2,516.8 529.2,514.3 530.2,511.8 531.2,509.3 532.2,506.7 533.2,504.2 534.2,501.7 535.2,499.2 536.2,496.6 537.2,494.1 538.2,491.6 539.2,489.1 540.2,486.7 541.2,484.2 542.2,481.7 543.2,479.2 544.2,476.8 545.2,474.4 546.2,471.9 547.2,469.5 548.2,467.1 549.2,464.7 550.2,462.3 551.2,460.0 552.2,457.6 553.2,455.3 554.2,452.9 555.2,450.6 556.2,448.3 557.2,446.1 558.2,443.8 559.2,441.6 560.2,439.4 561.2,437.2 562.2,435.0 563.2,432.8 564.2,430.7 565.2,428.6 566.2,426.5 567.2,424.4 568.2,422.4 569.2,420.4 570.2,418.4 571.2,416.4 572.2,414.4 573.2,412.5 574.2,410.6 575.2,408.8 576.2,406.9 577.2,405.1 578.2,403.3 579.2,401.6 580.2,399.8 581.2,398.1 582.2,396.5 583.2,394.8 584.2,393.2 585.2,391.6 586.2,390.1 587.2,388.6 588.2,387.1 589.2,385.6 590.2,384.2 591.2,382.8 592.2,381.5 593.2,380.2 594.2,378.9 595.2,377.6 596.2,376.4 597.2,375.2 598.2,374.1 599.2,373.0 600.2,371.9 601.2,370.9 602.2,369.9 603.2,368.9 604.2,368.0 605.2,367.1 606.2,366.2 607.2,365.4 608.2,364.6 609.2,363.9 610.2,363.2 611.2,362.5 612.2,361.9 613.2,361.3 614.2,360.8 615.2,360.3 616.2,359.8 617.2,359.4 618.2,359.0 619.2,358.6 620.2,358.3 621.2,358.1 622.2,357.8 623.2,357.6 624.2,357.5 625.2,357.4 626.2,357.3 627.2,357.3 628.2,357.3 629.2,357.3 630.2,357.4 631.2,357.5 632.2,357.7 633.2,357.9 634.2,358.1 635.2,358.4 636.2,358.7 637.2,359.1 638.2,359.5 639.2,359.9 640.2,360.4 641.2,360.9 642.2,361.5 643.2,362.1 644.2,362.7 645.2,363.4 646.2,364.1 647.2,364.9 648.2,365.6 649.2,366.5 650.2,367.3 651.2,368.2 652.2,369.2 653.2,370.1 654.2,371.2 655.2,372.2 656.2,373.3 657.2,374.4 658.2,375.6 659.2,376.7 660.2,378.0 661.2,379.2 662.2,380.5 663.2,381.8 664.2,383.2 665.2,384.6 666.2,386.0 667.2,387.5 668.2,389.0 669.2,390.5 670.2,392.1 671.2,393.6 672.2,395.3 673.2,396.9 674.2,398.6 675.2,400.3 676.2,402.0 677.2,403.8 678.2,405.6 679.2,407.4 680.2,409.3 681.2,411.1 682.2,413.0 683.2,415.0 684.2,416.9 685.2,418.9 686.2,420.9 687.2,422.9 688.2,425.0 689.2,427.1 690.2,429.2 691.2,431.3 692.2,433.4 693.2,435.6 694.2,437.8 695.2,440.0 696.2,442.2 697.2,444.4 698.2,446.7 699.2,449.0 700.2,451.3 701.2,453.6 702.2,455.9 703.2,458.2 704.2,460.6 705.2,463.0 706.2,465.4 707.2,467.8 708.2,470.2 709.2,472.6 710.2,475.0 711.2,477.5 712.2,479.9 713.2,482.4 714.2,484.9 715.2,487.3 716.2,489.8 717.2,492.3 718.2,494.8 719.2,497.3 720.2,499.9 721.2,502.4 722.2,504.9 723.2,507.4 724.2,509.9 725.2,512.5 726.2,515.0 727.2,517.5 728.2,520.1 729.2,522.6 730.2,525.1 731.2,527.7 732.2,530.2 733.2,532.7 734.2,535.3 735.2,537.8 736.2,540.3 737.2,542.8 738.2,545.3 739.2,547.8 740.2,550.3 741.2,552.8 742.2,555.2 743.2,557.7 744.2,560.2 745.2,562.6 746.2,565.0 747.2,567.5 748.2,569.9 749.2,572.3 750.2,574.6 751.2,577.0 752.2,579.4 753.2,581.7 754.2,584.0 755.2,586.3 756.2,588.6 757.2,590.9 758.2,593.2 759.2,595.4 760.2,597.6 761.2,599.8 762.2,602.0 763.2,604.2 764.2,606.3 765.2,608.4 766.2,610.5 767.2,612.6 768.2,614.7 769.2,616.7 770.2,618.7 771.2,620.7 772.2,622.6 773.2,624.5 774.2,626.4 775.2,628.3 776.2,630.2 777.2,632.0 778.2,633.8 779.2,635.5 780.2,637.3 781.2,639.0 782.2,640.7 783.2,642.3 784.2,643.9 785.2,645.5 786.2,647.1 787.2,648.6 788.2,650.1 789.2,651.5 790.2,653.0 791.2,654.4 792.2,655.7 793.2,657.0 794.2,658.3 795.2,659.6 796.2,660.8 797.2,662.0 798.2,663.2 799.2,664.3 800.2,665.4 801.2,666.4 802.2,667.4 803.2,668.4 804.2,669.3 805.2,670.2 806.2,671.1 807.2,671.9 808.2,672.7 809.2,673.4 810.2,674.1 811.2,674.8 812.2,675.4 813.2,676.0 814.2,676.6 815.2,677.1 816.2,677.6 817.2,678.0 818.2,678.4 819.2,678.8 820.2,679.1 821.2,679.4 822.2,679.6 823.2,679.8 824.2,680.0 825.2,680.1 826.2,680.2 827.2,680.2 828.2,680.2 829.2,680.2 830.2,680.1 831.2,680.0 832.2,679.9 833.2,679.7 834.2,679.4 835.2,679.2 836.2,678.8 837.2,678.5 838.2,678.1 839.2,677.7 840.2,677.2 841.2,676.7 842.2,676.1 843.2,675.6 844.2,674.9 845.2,674.3 846.2,673.6 847.2,672.8 848.2,672.0 849.2,671.2 850.2,670.4 851.2,669.5 852.2,668.5 853.2,667.6 854.2,666.6 855.2,665.5 856.2,664.5 857.2,663.4 858.2,662.2 859.2,661.0 860.2,659.8 861.2,658.6 862.2,657.3 863.2,656.0 864.2,654.6 865.2,653.2 866.2,651.8 867.2,650.3 868.2,648.9 869.2,647.3 870.2,645.8 871.2,644.2 872.2,642.6 873.2,641.0 874.2,639.3 875.2,637.6 876.2,635.9 877.2,634.1 878.2,632.3 879.2,630.5 880.2,628.6 881.2,626.8 882.2,624.9 883.2,623.0 884.2,621.0 885.2,619.0 886.2,617.0 887.2,615.0 888.2,613.0 889.2,610.9 890.2,608.8 891.2,606.7 892.2,604.6 893.2,602.4 894.2,600.2 895.2,598.0 896.2,595.8 897.2,593.6 898.2,591.3 899.2,589.0 900.2,586.8 901.2,584.4 902.2,582.1 903.2,579.8 904.2,577.4 905.2,575.1 906.2,572.7 907.2,570.3 908.2,567.9 909.2,565.5 910.2,563.0 911.2,560.6 912.2,558.1 913.2,555.7 914.2,553.2 915.2,550.7 916.2,548.2 917.2,545.7 918.2,543.2 919.2,540.7 920.2,538.2 921.2,535.7 922.2,533.2 923.2,530.6 924.2,528.1 925.2,525.6 926.2,523.1 927.2,520.5 928.2,518.0 929.2,515.5 930.2,512.9 931.2,510.4 932.2,507.9 933.2,505.3 934.2,502.8 935.2,500.3 936.2,497.8 937.2,495.3 938.2,492.8 939.2,490.3 940.2,487.8 941.2,485.3 942.2,482.8 943.2,480.4 944.2,477.9 945.2,475.4 946.2,473.0 947.2,470.6 948.2,468.2 949.2,465.8 950.2,463.4 951.2,461.0 952.2,458.7 953.2,456.3 954.2,454.0 955.2,451.7 956.2,449.4 957.2,447.1 958.2,444.8 959.2,442.6 960.2,440.4 961.2,438.2 962.2,436.0 963.2,433.8 964.2,431.7 965.2,429.5 966.2,427.4 967.2,425.4 968.2,423.3 969.2,421.3 970.2,419.3 971.2,417.3 972.2,415.3 973.2,413.4 974.2,411.5 975.2,409.6 976.2,407.7 977.2,405.9 978.2,404.1 979.2,402.3 980.2,400.6 981.2,398.9 982.2,397.2 983.2,395.6 984.2,393.9 985.2,392.3 986.2,390.8 987.2,389.2 988.2,387.7 989.2,386.3 990.2,384.8 991.2,383.4 992.2,382.1 993.2,380.7 994.2,379.4 995.2,378.2 996.2,377.0 997.2,375.8 998.2,374.6 999.2,373.5 1000.2,372.4 1001.2,371.3 1002.2,370.3 1003.2,369.3 1004.2,368.4 1005.2,367.5 1006.2,366.6 1007.2,365.8 1008.2,365.0 1009.2,364.2 1010.2,363.5 1011.2,362.8 1012.2,362.2 1013.2,361.6 1014.2,361.0 1015.2,360.5 1016.2,360.0 1017.2,359.6 1018.2,359.2 1019.2,358.8 1020.2,358.5 1021.2,358.2 1022.2,357.9 1023.2,357.7 1024.2,357.5"/>
<polyline fill="none" stroke="#f40000" stroke-width="1.45" stroke-linejoin="round" points="134.2,505.1 135.2,503.2 136.2,501.3 137.2,499.4 138.2,497.5 139.2,495.7 140.2,493.8 141.2,492.0 142.2,490.1 143.2,488.3 144.2,486.4 145.2,484.6 146.2,482.8 147.2,481.0 148.2,479.1 149.2,477.4 150.2,475.6 151.2,473.8 152.2,472.0 153.2,470.3 154.2,468.5 155.2,466.8 156.2,465.1 157.2,463.4 158.2,461.7 159.2,460.1 160.2,458.4 161.2,456.8 162.2,455.1 163.2,453.5 164.2,451.9 165.2,450.3 166.2,448.8 167.2,447.2 168.2,445.7 169.2,444.2 170.2,442.7 171.2,441.2 172.2,439.8 173.2,438.3 174.2,436.9 175.2,435.5 176.2,434.2 177.2,432.8 178.2,431.5 179.2,430.2 180.2,428.9 181.2,427.6 182.2,426.4 183.2,425.1 184.2,423.9 185.2,422.8 186.2,421.6 187.2,420.5 188.2,419.4 189.2,418.3 190.2,417.3 191.2,416.2 192.2,415.2 193.2,414.2 194.2,413.3 195.2,412.4 196.2,411.5 197.2,410.6 198.2,409.7 199.2,408.9 200.2,408.1 201.2,407.4 202.2,406.6 203.2,405.9 204.2,405.2 205.2,404.6 206.2,403.9 207.2,403.3 208.2,402.8 209.2,402.2 210.2,401.7 211.2,401.2 212.2,400.8 213.2,400.4 214.2,400.0 215.2,399.6 216.2,399.2 217.2,398.9 218.2,398.7 219.2,398.4 220.2,398.2 221.2,398.0 222.2,397.8 223.2,397.7 224.2,397.6 225.2,397.5 226.2,397.5 227.2,397.5 228.2,397.5 229.2,397.5 230.2,397.6 231.2,397.7 232.2,397.9 233.2,398.0 234.2,398.2 235.2,398.5 236.2,398.7 237.2,399.0 238.2,399.3 239.2,399.6 240.2,400.0 241.2,400.4 242.2,400.9 243.2,401.3 244.2,401.8 245.2,402.3 246.2,402.9 247.2,403.4 248.2,404.1 249.2,404.7 250.2,405.3 251.2,406.0 252.2,406.7 253.2,407.5 254.2,408.3 255.2,409.1 256.2,409.9 257.2,410.7 258.2,411.6 259.2,412.5 260.2,413.5 261.2,414.4 262.2,415.4 263.2,416.4 264.2,417.4 265.2,418.5 266.2,419.6 267.2,420.7 268.2,421.8 269.2,423.0 270.2,424.1 271.2,425.4 272.2,426.6 273.2,427.8 274.2,429.1 275.2,430.4 276.2,431.7 277.2,433.0 278.2,434.4 279.2,435.8 280.2,437.2 281.2,438.6 282.2,440.0 283.2,441.5 284.2,443.0 285.2,444.5 286.2,446.0 287.2,447.5 288.2,449.0 289.2,450.6 290.2,452.2 291.2,453.8 292.2,455.4 293.2,457.0 294.2,458.7 295.2,460.3 296.2,462.0 297.2,463.7 298.2,465.4 299.2,467.1 300.2,468.9 301.2,470.6 302.2,472.3 303.2,474.1 304.2,475.9 305.2,477.7 306.2,479.5 307.2,481.3 308.2,483.1 309.2,484.9 310.2,486.7 311.2,488.6 312.2,490.4 313.2,492.3 314.2,494.1 315.2,496.0 316.2,497.9 317.2,499.8 318.2,501.6 319.2,503.5 320.2,505.4 321.2,507.3 322.2,509.2 323.2,511.1 324.2,513.0 325.2,514.9 326.2,516.8 327.2,518.7 328.2,520.6 329.2,522.5 330.2,524.4 331.2,526.3 332.2,528.2 333.2,530.1 334.2,532.0 335.2,533.9 336.2,535.8 337.2,537.7 338.2,539.5 339.2,541.4 340.2,543.3 341.2,545.1 342.2,547.0 343.2,548.8 344.2,550.7 345.2,552.5 346.2,554.3 347.2,556.1 348.2,557.9 349.2,559.7 350.2,561.5 351.2,563.3 352.2,565.1 353.2,566.8 354.2,568.6 355.2,570.3 356.2,572.0 357.2,573.7 358.2,575.4 359.2,577.1 360.2,578.7 361.2,580.4 362.2,582.0 363.2,583.6 364.2,585.2 365.2,586.8 366.2,588.4 367.2,589.9 368.2,591.5 369.2,593.0 370.2,594.5 371.2,595.9 372.2,597.4 373.2,598.8 374.2,600.3 375.2,601.7 376.2,603.0 377.2,604.4 378.2,605.7 379.2,607.0 380.2,608.3 381.2,609.6 382.2,610.9 383.2,612.1 384.2,613.3 385.2,614.5 386.2,615.6 387.2,616.8 388.2,617.9 389.2,619.0 390.2,620.0 391.2,621.0 392.2,622.1 393.2,623.0 394.2,624.0 395.2,624.9 396.2,625.8 397.2,626.7 398.2,627.6 399.2,628.4 400.2,629.2 401.2,630.0 402.2,630.7 403.2,631.4 404.2,632.1 405.2,632.8 406.2,633.4 407.2,634.0 408.2,634.6 409.2,635.1 410.2,635.7 411.2,636.2 412.2,636.6 413.2,637.1 414.2,637.5 415.2,637.8 416.2,638.2 417.2,638.5 418.2,638.8 419.2,639.0 420.2,639.3 421.2,639.5 422.2,639.6 423.2,639.8 424.2,639.9 425.2,640.0 426.2,640.0 427.2,640.0 428.2,640.0 429.2,640.0 430.2,639.9 431.2,639.8 432.2,639.7 433.2,639.5 434.2,639.3 435.2,639.1 436.2,638.9 437.2,638.6 438.2,638.3 439.2,637.9 440.2,637.6 441.2,637.2 442.2,636.7 443.2,636.3 444.2,635.8 445.2,635.3 446.2,634.8 447.2,634.2 448.2,633.6 449.2,633.0 450.2,632.3 451.2,631.6 452.2,630.9 453.2,630.2 454.2,629.4 455.2,628.6 456.2,627.8 457.2,627.0 458.2,626.1 459.2,625.2 460.2,624.3 461.2,623.3 462.2,622.3 463.2,621.3 464.2,620.3 465.2,619.2 466.2,618.2 467.2,617.1 468.2,615.9 469.2,614.8 470.2,613.6 471.2,612.4 472.2,611.2 473.2,610.0 474.2,608.7 475.2,607.4 476.2,606.1 477.2,604.8 478.2,603.4 479.2,602.0 480.2,600.6 481.2,599.2 482.2,597.8 483.2,596.3 484.2,594.9 485.2,593.4 486.2,591.9 487.2,590.3 488.2,588.8 489.2,587.2 490.2,585.7 491.2,584.1 492.2,582.5 493.2,580.8 494.2,579.2 495.2,577.5 496.2,575.9 497.2,574.2 498.2,572.5 499.2,570.8 500.2,569.0 501.2,567.3 502.2,565.5 503.2,563.8 504.2,562.0 505.2,560.2 506.2,558.4 507.2,556.6 508.2,554.8 509.2,553.0 510.2,551.2 511.2,549.3 512.2,547.5 513.2,545.6 514.2,543.8 515.2,541.9 516.2,540.0 517.2,538.2 518.2,536.3 519.2,534.4 520.2,532.5 521.2,530.6 522.2,528.7 523.2,526.8 524.2,524.9 525.2,523.0 526.2,521.1 527.2,519.2 528.2,517.3 529.2,515.4 530.2,513.5 531.2,511.6 532.2,509.7 533.2,507.8 534.2,505.9 535.2,504.0 536.2,502.2 537.2,500.3 538.2,498.4 539.2,496.5 540.2,494.7 541.2,492.8 542.2,490.9 543.2,489.1 544.2,487.2 545.2,485.4 546.2,483.6 547.2,481.8 548.2,480.0 549.2,478.2 550.2,476.4 551.2,474.6 552.2,472.8 553.2,471.1 554.2,469.3 555.2,467.6 556.2,465.9 557.2,464.2 558.2,462.5 559.2,460.8 560.2,459.1 561.2,457.5 562.2,455.9 563.2,454.2 564.2,452.6 565.2,451.0 566.2,449.5 567.2,447.9 568.2,446.4 569.2,444.9 570.2,443.4 571.2,441.9 572.2,440.4 573.2,439.0 574.2,437.6 575.2,436.2 576.2,434.8 577.2,433.4 578.2,432.1 579.2,430.7 580.2,429.4 581.2,428.2 582.2,426.9 583.2,425.7 584.2,424.5 585.2,423.3 586.2,422.1 587.2,421.0 588.2,419.9 589.2,418.8 590.2,417.7 591.2,416.7 592.2,415.7 593.2,414.7 594.2,413.7 595.2,412.8 596.2,411.9 597.2,411.0 598.2,410.1 599.2,409.3 600.2,408.5 601.2,407.7 602.2,407.0 603.2,406.2 604.2,405.5 605.2,404.9 606.2,404.2 607.2,403.6 608.2,403.0 609.2,402.5 610.2,401.9 611.2,401.4 612.2,401.0 613.2,400.5 614.2,400.1 615.2,399.7 616.2,399.4 617.2,399.1 618.2,398.8 619.2,398.5 620.2,398.3 621.2,398.1 622.2,397.9 623.2,397.8 624.2,397.6 625.2,397.6 626.2,397.5 627.2,397.5 628.2,397.5 629.2,397.5 630.2,397.6 631.2,397.7 632.2,397.8 633.2,397.9 634.2,398.1 635.2,398.3 636.2,398.6 637.2,398.9 638.2,399.2 639.2,399.5 640.2,399.9 641.2,400.2 642.2,400.7 643.2,401.1 644.2,401.6 645.2,402.1 646.2,402.6 647.2,403.2 648.2,403.8 649.2,404.4 650.2,405.0 651.2,405.7 652.2,406.4 653.2,407.2 654.2,407.9 655.2,408.7 656.2,409.5 657.2,410.4 658.2,411.2 659.2,412.1 660.2,413.0 661.2,414.0 662.2,414.9 663.2,415.9 664.2,417.0 665.2,418.0 666.2,419.1 667.2,420.2 668.2,421.3 669.2,422.4 670.2,423.6 671.2,424.8 672.2,426.0 673.2,427.3 674.2,428.5 675.2,429.8 676.2,431.1 677.2,432.4 678.2,433.8 679.2,435.1 680.2,436.5 681.2,437.9 682.2,439.4 683.2,440.8 684.2,442.3 685.2,443.8 686.2,445.3 687.2,446.8 688.2,448.3 689.2,449.9 690.2,451.5 691.2,453.1 692.2,454.7 693.2,456.3 694.2,457.9 695.2,459.6 696.2,461.3 697.2,462.9 698.2,464.6 699.2,466.4 700.2,468.1 701.2,469.8 702.2,471.6 703.2,473.3 704.2,475.1 705.2,476.9 706.2,478.7 707.2,480.5 708.2,482.3 709.2,484.1 710.2,485.9 711.2,487.7 712.2,489.6 713.2,491.4 714.2,493.3 715.2,495.2 716.2,497.0 717.2,498.9 718.2,500.8 719.2,502.7 720.2,504.6 721.2,506.5 722.2,508.3 723.2,510.2 724.2,512.1 725.2,514.0 726.2,515.9 727.2,517.8 728.2,519.7 729.2,521.7 730.2,523.6 731.2,525.5 732.2,527.4 733.2,529.3 734.2,531.1 735.2,533.0 736.2,534.9 737.2,536.8 738.2,538.7 739.2,540.6 740.2,542.4 741.2,544.3 742.2,546.2 743.2,548.0 744.2,549.8 745.2,551.7 746.2,553.5 747.2,555.3 748.2,557.1 749.2,558.9 750.2,560.7 751.2,562.5 752.2,564.3 753.2,566.0 754.2,567.8 755.2,569.5 756.2,571.2 757.2,572.9 758.2,574.6 759.2,576.3 760.2,578.0 761.2,579.6 762.2,581.3 763.2,582.9 764.2,584.5 765.2,586.1 766.2,587.7 767.2,589.2 768.2,590.8 769.2,592.3 770.2,593.8 771.2,595.3 772.2,596.7 773.2,598.2 774.2,599.6 775.2,601.0 776.2,602.4 777.2,603.8 778.2,605.1 779.2,606.5 780.2,607.8 781.2,609.0 782.2,610.3 783.2,611.5 784.2,612.8 785.2,613.9 786.2,615.1 787.2,616.3 788.2,617.4 789.2,618.5 790.2,619.5 791.2,620.6 792.2,621.6 793.2,622.6 794.2,623.6 795.2,624.5 796.2,625.4 797.2,626.3 798.2,627.2 799.2,628.0 800.2,628.8 801.2,629.6 802.2,630.4 803.2,631.1 804.2,631.8 805.2,632.5 806.2,633.1 807.2,633.8 808.2,634.3 809.2,634.9 810.2,635.4 811.2,635.9 812.2,636.4 813.2,636.9 814.2,637.3 815.2,637.7 816.2,638.0 817.2,638.4 818.2,638.7 819.2,638.9 820.2,639.2 821.2,639.4 822.2,639.6 823.2,639.7 824.2,639.8 825.2,639.9 826.2,640.0 827.2,640.0 828.2,640.0 829.2,640.0 830.2,639.9 831.2,639.9 832.2,639.7 833.2,639.6 834.2,639.4 835.2,639.2 836.2,639.0 837.2,638.7 838.2,638.4 839.2,638.1 840.2,637.7 841.2,637.3 842.2,636.9 843.2,636.5 844.2,636.0 845.2,635.5 846.2,635.0 847.2,634.4 848.2,633.9 849.2,633.2 850.2,632.6 851.2,631.9 852.2,631.2 853.2,630.5 854.2,629.8 855.2,629.0 856.2,628.2 857.2,627.3 858.2,626.5 859.2,625.6 860.2,624.7 861.2,623.7 862.2,622.8 863.2,621.8 864.2,620.8 865.2,619.7 866.2,618.7 867.2,617.6 868.2,616.5 869.2,615.3 870.2,614.1 871.2,613.0 872.2,611.8 873.2,610.5 874.2,609.3 875.2,608.0 876.2,606.7 877.2,605.4 878.2,604.0 879.2,602.7 880.2,601.3 881.2,599.9 882.2,598.4 883.2,597.0 884.2,595.5 885.2,594.1 886.2,592.6 887.2,591.0 888.2,589.5 889.2,587.9 890.2,586.4 891.2,584.8 892.2,583.2 893.2,581.6 894.2,579.9 895.2,578.3 896.2,576.6 897.2,574.9 898.2,573.2 899.2,571.5 900.2,569.8 901.2,568.1 902.2,566.3 903.2,564.6 904.2,562.8 905.2,561.0 906.2,559.2 907.2,557.4 908.2,555.6 909.2,553.8 910.2,552.0 911.2,550.2 912.2,548.3 913.2,546.5 914.2,544.6 915.2,542.8 916.2,540.9 917.2,539.0 918.2,537.1 919.2,535.3 920.2,533.4 921.2,531.5 922.2,529.6 923.2,527.7 924.2,525.8 925.2,523.9 926.2,522.0 927.2,520.1 928.2,518.2 929.2,516.3 930.2,514.4 931.2,512.5 932.2,510.6 933.2,508.7 934.2,506.8 935.2,504.9 936.2,503.0 937.2,501.1 938.2,499.2 939.2,497.4 940.2,495.5 941.2,493.6 942.2,491.8 943.2,489.9 944.2,488.1 945.2,486.2 946.2,484.4 947.2,482.6 948.2,480.8 949.2,479.0 950.2,477.2 951.2,475.4 952.2,473.6 953.2,471.9 954.2,470.1 955.2,468.4 956.2,466.7 957.2,464.9 958.2,463.2 959.2,461.6 960.2,459.9 961.2,458.2 962.2,456.6 963.2,455.0 964.2,453.4 965.2,451.8 966.2,450.2 967.2,448.6 968.2,447.1 969.2,445.5 970.2,444.0 971.2,442.6 972.2,441.1 973.2,439.6 974.2,438.2 975.2,436.8 976.2,435.4 977.2,434.0 978.2,432.7 979.2,431.3 980.2,430.0 981.2,428.7 982.2,427.5 983.2,426.2 984.2,425.0 985.2,423.8 986.2,422.7 987.2,421.5 988.2,420.4 989.2,419.3 990.2,418.2 991.2,417.1 992.2,416.1 993.2,415.1 994.2,414.1 995.2,413.2 996.2,412.3 997.2,411.4 998.2,410.5 999.2,409.7 1000.2,408.8 1001.2,408.0 1002.2,407.3 1003.2,406.6 1004.2,405.8 1005.2,405.2 1006.2,404.5 1007.2,403.9 1008.2,403.3 1009.2,402.7 1010.2,402.2 1011.2,401.7 1012.2,401.2 1013.2,400.7 1014.2,400.3 1015.2,399.9 1016.2,399.6 1017.2,399.2 1018.2,398.9 1019.2,398.6 1020.2,398.4 1021.2,398.2 1022.2,398.0 1023.2,397.8 1024.2,397.7"/>
<polyline fill="none" stroke="#e800e8" stroke-width="1.45" stroke-linejoin="round" points="134.2,509.6 135.2,508.4 136.2,507.1 137.2,505.8 138.2,504.6 139.2,503.3 140.2,502.1 141.2,500.8 142.2,499.6 143.2,498.4 144.2,497.1 145.2,495.9 146.2,494.7 147.2,493.5 148.2,492.3 149.2,491.1 150.2,489.9 151.2,488.7 152.2,487.5 153.2,486.4 154.2,485.2 155.2,484.0 156.2,482.9 157.2,481.8 158.2,480.6 159.2,479.5 160.2,478.4 161.2,477.3 162.2,476.2 163.2,475.2 164.2,474.1 165.2,473.0 166.2,472.0 167.2,471.0 168.2,469.9 169.2,468.9 170.2,467.9 171.2,466.9 172.2,466.0 173.2,465.0 174.2,464.1 175.2,463.1 176.2,462.2 177.2,461.3 178.2,460.4 179.2,459.5 180.2,458.7 181.2,457.8 182.2,457.0 183.2,456.2 184.2,455.4 185.2,454.6 186.2,453.8 187.2,453.1 188.2,452.3 189.2,451.6 190.2,450.9 191.2,450.2 192.2,449.6 193.2,448.9 194.2,448.3 195.2,447.6 196.2,447.0 197.2,446.5 198.2,445.9 199.2,445.3 200.2,444.8 201.2,444.3 202.2,443.8 203.2,443.3 204.2,442.9 205.2,442.4 206.2,442.0 207.2,441.6 208.2,441.2 209.2,440.9 210.2,440.5 211.2,440.2 212.2,439.9 213.2,439.6 214.2,439.4 215.2,439.1 216.2,438.9 217.2,438.7 218.2,438.5 219.2,438.3 220.2,438.2 221.2,438.0 222.2,437.9 223.2,437.9 224.2,437.8 225.2,437.7 226.2,437.7 227.2,437.7 228.2,437.7 229.2,437.7 230.2,437.8 231.2,437.9 232.2,438.0 233.2,438.1 234.2,438.2 235.2,438.4 236.2,438.5 237.2,438.7 238.2,438.9 239.2,439.2 240.2,439.4 241.2,439.7 242.2,440.0 243.2,440.3 244.2,440.6 245.2,440.9 246.2,441.3 247.2,441.7 248.2,442.1 249.2,442.5 250.2,443.0 251.2,443.4 252.2,443.9 253.2,444.4 254.2,444.9 255.2,445.4 256.2,446.0 257.2,446.6 258.2,447.2 259.2,447.8 260.2,448.4 261.2,449.0 262.2,449.7 263.2,450.3 264.2,451.0 265.2,451.7 266.2,452.5 267.2,453.2 268.2,454.0 269.2,454.7 270.2,455.5 271.2,456.3 272.2,457.1 273.2,458.0 274.2,458.8 275.2,459.7 276.2,460.6 277.2,461.5 278.2,462.4 279.2,463.3 280.2,464.2 281.2,465.2 282.2,466.1 283.2,467.1 284.2,468.1 285.2,469.1 286.2,470.1 287.2,471.1 288.2,472.2 289.2,473.2 290.2,474.3 291.2,475.3 292.2,476.4 293.2,477.5 294.2,478.6 295.2,479.7 296.2,480.8 297.2,482.0 298.2,483.1 299.2,484.2 300.2,485.4 301.2,486.6 302.2,487.7 303.2,488.9 304.2,490.1 305.2,491.3 306.2,492.5 307.2,493.7 308.2,494.9 309.2,496.1 310.2,497.4 311.2,498.6 312.2,499.8 313.2,501.1 314.2,502.3 315.2,503.5 316.2,504.8 317.2,506.1 318.2,507.3 319.2,508.6 320.2,509.8 321.2,511.1 322.2,512.4 323.2,513.6 324.2,514.9 325.2,516.2 326.2,517.4 327.2,518.7 328.2,520.0 329.2,521.3 330.2,522.5 331.2,523.8 332.2,525.1 333.2,526.3 334.2,527.6 335.2,528.9 336.2,530.1 337.2,531.4 338.2,532.6 339.2,533.9 340.2,535.1 341.2,536.4 342.2,537.6 343.2,538.9 344.2,540.1 345.2,541.3 346.2,542.5 347.2,543.7 348.2,544.9 349.2,546.1 350.2,547.3 351.2,548.5 352.2,549.7 353.2,550.9 354.2,552.0 355.2,553.2 356.2,554.3 357.2,555.5 358.2,556.6 359.2,557.7 360.2,558.8 361.2,559.9 362.2,561.0 363.2,562.1 364.2,563.2 365.2,564.2 366.2,565.3 367.2,566.3 368.2,567.3 369.2,568.4 370.2,569.4 371.2,570.3 372.2,571.3 373.2,572.3 374.2,573.2 375.2,574.2 376.2,575.1 377.2,576.0 378.2,576.9 379.2,577.8 380.2,578.6 381.2,579.5 382.2,580.3 383.2,581.1 384.2,581.9 385.2,582.7 386.2,583.5 387.2,584.3 388.2,585.0 389.2,585.7 390.2,586.4 391.2,587.1 392.2,587.8 393.2,588.4 394.2,589.1 395.2,589.7 396.2,590.3 397.2,590.9 398.2,591.5 399.2,592.0 400.2,592.6 401.2,593.1 402.2,593.6 403.2,594.1 404.2,594.5 405.2,595.0 406.2,595.4 407.2,595.8 408.2,596.2 409.2,596.5 410.2,596.9 411.2,597.2 412.2,597.5 413.2,597.8 414.2,598.1 415.2,598.3 416.2,598.6 417.2,598.8 418.2,599.0 419.2,599.1 420.2,599.3 421.2,599.4 422.2,599.5 423.2,599.6 424.2,599.7 425.2,599.8 426.2,599.8 427.2,599.8 428.2,599.8 429.2,599.8 430.2,599.7 431.2,599.7 432.2,599.6 433.2,599.5 434.2,599.3 435.2,599.2 436.2,599.0 437.2,598.8 438.2,598.6 439.2,598.4 440.2,598.2 441.2,597.9 442.2,597.6 443.2,597.3 444.2,597.0 445.2,596.6 446.2,596.3 447.2,595.9 448.2,595.5 449.2,595.1 450.2,594.6 451.2,594.2 452.2,593.7 453.2,593.2 454.2,592.7 455.2,592.2 456.2,591.6 457.2,591.1 458.2,590.5 459.2,589.9 460.2,589.3 461.2,588.6 462.2,588.0 463.2,587.3 464.2,586.6 465.2,585.9 466.2,585.2 467.2,584.5 468.2,583.7 469.2,582.9 470.2,582.2 471.2,581.4 472.2,580.5 473.2,579.7 474.2,578.9 475.2,578.0 476.2,577.1 477.2,576.2 478.2,575.3 479.2,574.4 480.2,573.5 481.2,572.5 482.2,571.6 483.2,570.6 484.2,569.6 485.2,568.6 486.2,567.6 487.2,566.6 488.2,565.6 489.2,564.5 490.2,563.5 491.2,562.4 492.2,561.3 493.2,560.2 494.2,559.1 495.2,558.0 496.2,556.9 497.2,555.8 498.2,554.7 499.2,553.5 500.2,552.4 501.2,551.2 502.2,550.0 503.2,548.8 504.2,547.7 505.2,546.5 506.2,545.3 507.2,544.1 508.2,542.9 509.2,541.6 510.2,540.4 511.2,539.2 512.2,538.0 513.2,536.7 514.2,535.5 515.2,534.2 516.2,533.0 517.2,531.7 518.2,530.5 519.2,529.2 520.2,527.9 521.2,526.7 522.2,525.4 523.2,524.2 524.2,522.9 525.2,521.6 526.2,520.3 527.2,519.1 528.2,517.8 529.2,516.5 530.2,515.3 531.2,514.0 532.2,512.7 533.2,511.4 534.2,510.2 535.2,508.9 536.2,507.7 537.2,506.4 538.2,505.1 539.2,503.9 540.2,502.6 541.2,501.4 542.2,500.2 543.2,498.9 544.2,497.7 545.2,496.5 546.2,495.2 547.2,494.0 548.2,492.8 549.2,491.6 550.2,490.4 551.2,489.2 552.2,488.1 553.2,486.9 554.2,485.7 555.2,484.6 556.2,483.4 557.2,482.3 558.2,481.1 559.2,480.0 560.2,478.9 561.2,477.8 562.2,476.7 563.2,475.6 564.2,474.6 565.2,473.5 566.2,472.5 567.2,471.4 568.2,470.4 569.2,469.4 570.2,468.4 571.2,467.4 572.2,466.4 573.2,465.4 574.2,464.5 575.2,463.5 576.2,462.6 577.2,461.7 578.2,460.8 579.2,459.9 580.2,459.1 581.2,458.2 582.2,457.4 583.2,456.6 584.2,455.7 585.2,455.0 586.2,454.2 587.2,453.4 588.2,452.7 589.2,451.9 590.2,451.2 591.2,450.5 592.2,449.9 593.2,449.2 594.2,448.6 595.2,447.9 596.2,447.3 597.2,446.7 598.2,446.2 599.2,445.6 600.2,445.1 601.2,444.5 602.2,444.0 603.2,443.5 604.2,443.1 605.2,442.6 606.2,442.2 607.2,441.8 608.2,441.4 609.2,441.0 610.2,440.7 611.2,440.4 612.2,440.0 613.2,439.7 614.2,439.5 615.2,439.2 616.2,439.0 617.2,438.8 618.2,438.6 619.2,438.4 620.2,438.2 621.2,438.1 622.2,438.0 623.2,437.9 624.2,437.8 625.2,437.8 626.2,437.7 627.2,437.7 628.2,437.7 629.2,437.7 630.2,437.8 631.2,437.8 632.2,437.9 633.2,438.0 634.2,438.1 635.2,438.3 636.2,438.4 637.2,438.6 638.2,438.8 639.2,439.0 640.2,439.3 641.2,439.5 642.2,439.8 643.2,440.1 644.2,440.4 645.2,440.8 646.2,441.1 647.2,441.5 648.2,441.9 649.2,442.3 650.2,442.8 651.2,443.2 652.2,443.7 653.2,444.2 654.2,444.7 655.2,445.2 656.2,445.7 657.2,446.3 658.2,446.9 659.2,447.5 660.2,448.1 661.2,448.7 662.2,449.4 663.2,450.0 664.2,450.7 665.2,451.4 666.2,452.1 667.2,452.9 668.2,453.6 669.2,454.4 670.2,455.2 671.2,456.0 672.2,456.8 673.2,457.6 674.2,458.4 675.2,459.3 676.2,460.2 677.2,461.1 678.2,462.0 679.2,462.9 680.2,463.8 681.2,464.7 682.2,465.7 683.2,466.7 684.2,467.7 685.2,468.6 686.2,469.7 687.2,470.7 688.2,471.7 689.2,472.7 690.2,473.8 691.2,474.9 692.2,475.9 693.2,477.0 694.2,478.1 695.2,479.2 696.2,480.3 697.2,481.5 698.2,482.6 699.2,483.7 700.2,484.9 701.2,486.0 702.2,487.2 703.2,488.4 704.2,489.6 705.2,490.8 706.2,492.0 707.2,493.2 708.2,494.4 709.2,495.6 710.2,496.8 711.2,498.0 712.2,499.3 713.2,500.5 714.2,501.7 715.2,503.0 716.2,504.2 717.2,505.5 718.2,506.7 719.2,508.0 720.2,509.3 721.2,510.5 722.2,511.8 723.2,513.1 724.2,514.3 725.2,515.6 726.2,516.9 727.2,518.1 728.2,519.4 729.2,520.7 730.2,522.0 731.2,523.2 732.2,524.5 733.2,525.8 734.2,527.0 735.2,528.3 736.2,529.6 737.2,530.8 738.2,532.1 739.2,533.3 740.2,534.6 741.2,535.8 742.2,537.1 743.2,538.3 744.2,539.5 745.2,540.8 746.2,542.0 747.2,543.2 748.2,544.4 749.2,545.6 750.2,546.8 751.2,548.0 752.2,549.2 753.2,550.3 754.2,551.5 755.2,552.7 756.2,553.8 757.2,555.0 758.2,556.1 759.2,557.2 760.2,558.3 761.2,559.4 762.2,560.5 763.2,561.6 764.2,562.7 765.2,563.8 766.2,564.8 767.2,565.9 768.2,566.9 769.2,567.9 770.2,568.9 771.2,569.9 772.2,570.9 773.2,571.8 774.2,572.8 775.2,573.7 776.2,574.7 777.2,575.6 778.2,576.5 779.2,577.4 780.2,578.2 781.2,579.1 782.2,579.9 783.2,580.8 784.2,581.6 785.2,582.4 786.2,583.1 787.2,583.9 788.2,584.7 789.2,585.4 790.2,586.1 791.2,586.8 792.2,587.5 793.2,588.2 794.2,588.8 795.2,589.4 796.2,590.0 797.2,590.6 798.2,591.2 799.2,591.8 800.2,592.3 801.2,592.8 802.2,593.4 803.2,593.8 804.2,594.3 805.2,594.8 806.2,595.2 807.2,595.6 808.2,596.0 809.2,596.4 810.2,596.7 811.2,597.1 812.2,597.4 813.2,597.7 814.2,598.0 815.2,598.2 816.2,598.5 817.2,598.7 818.2,598.9 819.2,599.1 820.2,599.2 821.2,599.4 822.2,599.5 823.2,599.6 824.2,599.7 825.2,599.7 826.2,599.8 827.2,599.8 828.2,599.8 829.2,599.8 830.2,599.7 831.2,599.7 832.2,599.6 833.2,599.5 834.2,599.4 835.2,599.3 836.2,599.1 837.2,598.9 838.2,598.7 839.2,598.5 840.2,598.3 841.2,598.0 842.2,597.7 843.2,597.4 844.2,597.1 845.2,596.8 846.2,596.4 847.2,596.1 848.2,595.7 849.2,595.3 850.2,594.8 851.2,594.4 852.2,593.9 853.2,593.4 854.2,592.9 855.2,592.4 856.2,591.9 857.2,591.3 858.2,590.7 859.2,590.2 860.2,589.5 861.2,588.9 862.2,588.3 863.2,587.6 864.2,586.9 865.2,586.2 866.2,585.5 867.2,584.8 868.2,584.0 869.2,583.3 870.2,582.5 871.2,581.7 872.2,580.9 873.2,580.1 874.2,579.2 875.2,578.4 876.2,577.5 877.2,576.6 878.2,575.7 879.2,574.8 880.2,573.9 881.2,573.0 882.2,572.0 883.2,571.0 884.2,570.1 885.2,569.1 886.2,568.1 887.2,567.1 888.2,566.0 889.2,565.0 890.2,563.9 891.2,562.9 892.2,561.8 893.2,560.7 894.2,559.6 895.2,558.5 896.2,557.4 897.2,556.3 898.2,555.2 899.2,554.0 900.2,552.9 901.2,551.7 902.2,550.6 903.2,549.4 904.2,548.2 905.2,547.0 906.2,545.8 907.2,544.6 908.2,543.4 909.2,542.2 910.2,541.0 911.2,539.7 912.2,538.5 913.2,537.3 914.2,536.0 915.2,534.8 916.2,533.5 917.2,532.3 918.2,531.0 919.2,529.8 920.2,528.5 921.2,527.3 922.2,526.0 923.2,524.7 924.2,523.5 925.2,522.2 926.2,520.9 927.2,519.6 928.2,518.4 929.2,517.1 930.2,515.8 931.2,514.6 932.2,513.3 933.2,512.0 934.2,510.8 935.2,509.5 936.2,508.2 937.2,507.0 938.2,505.7 939.2,504.5 940.2,503.2 941.2,502.0 942.2,500.7 943.2,499.5 944.2,498.2 945.2,497.0 946.2,495.8 947.2,494.6 948.2,493.4 949.2,492.2 950.2,491.0 951.2,489.8 952.2,488.6 953.2,487.4 954.2,486.2 955.2,485.1 956.2,483.9 957.2,482.8 958.2,481.7 959.2,480.5 960.2,479.4 961.2,478.3 962.2,477.2 963.2,476.1 964.2,475.0 965.2,474.0 966.2,472.9 967.2,471.9 968.2,470.8 969.2,469.8 970.2,468.8 971.2,467.8 972.2,466.8 973.2,465.9 974.2,464.9 975.2,464.0 976.2,463.0 977.2,462.1 978.2,461.2 979.2,460.3 980.2,459.5 981.2,458.6 982.2,457.8 983.2,456.9 984.2,456.1 985.2,455.3 986.2,454.5 987.2,453.8 988.2,453.0 989.2,452.3 990.2,451.6 991.2,450.8 992.2,450.2 993.2,449.5 994.2,448.8 995.2,448.2 996.2,447.6 997.2,447.0 998.2,446.4 999.2,445.8 1000.2,445.3 1001.2,444.8 1002.2,444.3 1003.2,443.8 1004.2,443.3 1005.2,442.8 1006.2,442.4 1007.2,442.0 1008.2,441.6 1009.2,441.2 1010.2,440.8 1011.2,440.5 1012.2,440.2 1013.2,439.9 1014.2,439.6 1015.2,439.3 1016.2,439.1 1017.2,438.9 1018.2,438.7 1019.2,438.5 1020.2,438.3 1021.2,438.2 1022.2,438.0 1023.2,437.9 1024.2,437.8"/>
<polyline fill="none" stroke="#dccf00" stroke-width="1.45" stroke-linejoin="round" points="134.2,514.1 135.2,513.5 136.2,512.9 137.2,512.2 138.2,511.6 139.2,511.0 140.2,510.4 141.2,509.7 142.2,509.1 143.2,508.5 144.2,507.9 145.2,507.2 146.2,506.6 147.2,506.0 148.2,505.4 149.2,504.8 150.2,504.2 151.2,503.6 152.2,503.0 153.2,502.4 154.2,501.9 155.2,501.3 156.2,500.7 157.2,500.1 158.2,499.6 159.2,499.0 160.2,498.4 161.2,497.9 162.2,497.3 163.2,496.8 164.2,496.3 165.2,495.7 166.2,495.2 167.2,494.7 168.2,494.2 169.2,493.7 170.2,493.1 171.2,492.7 172.2,492.2 173.2,491.7 174.2,491.2 175.2,490.7 176.2,490.3 177.2,489.8 178.2,489.4 179.2,488.9 180.2,488.5 181.2,488.1 182.2,487.6 183.2,487.2 184.2,486.8 185.2,486.4 186.2,486.1 187.2,485.7 188.2,485.3 189.2,484.9 190.2,484.6 191.2,484.2 192.2,483.9 193.2,483.6 194.2,483.2 195.2,482.9 196.2,482.6 197.2,482.3 198.2,482.1 199.2,481.8 200.2,481.5 201.2,481.3 202.2,481.0 203.2,480.8 204.2,480.5 205.2,480.3 206.2,480.1 207.2,479.9 208.2,479.7 209.2,479.5 210.2,479.4 211.2,479.2 212.2,479.0 213.2,478.9 214.2,478.8 215.2,478.6 216.2,478.5 217.2,478.4 218.2,478.3 219.2,478.2 220.2,478.2 221.2,478.1 222.2,478.0 223.2,478.0 224.2,478.0 225.2,477.9 226.2,477.9 227.2,477.9 228.2,477.9 229.2,477.9 230.2,478.0 231.2,478.0 232.2,478.1 233.2,478.1 234.2,478.2 235.2,478.3 236.2,478.3 237.2,478.4 238.2,478.5 239.2,478.7 240.2,478.8 241.2,478.9 242.2,479.1 243.2,479.2 244.2,479.4 245.2,479.6 246.2,479.7 247.2,479.9 248.2,480.1 249.2,480.4 250.2,480.6 251.2,480.8 252.2,481.0 253.2,481.3 254.2,481.6 255.2,481.8 256.2,482.1 257.2,482.4 258.2,482.7 259.2,483.0 260.2,483.3 261.2,483.6 262.2,484.0 263.2,484.3 264.2,484.6 265.2,485.0 266.2,485.4 267.2,485.7 268.2,486.1 269.2,486.5 270.2,486.9 271.2,487.3 272.2,487.7 273.2,488.1 274.2,488.6 275.2,489.0 276.2,489.4 277.2,489.9 278.2,490.4 279.2,490.8 280.2,491.3 281.2,491.8 282.2,492.2 283.2,492.7 284.2,493.2 285.2,493.7 286.2,494.2 287.2,494.8 288.2,495.3 289.2,495.8 290.2,496.3 291.2,496.9 292.2,497.4 293.2,498.0 294.2,498.5 295.2,499.1 296.2,499.7 297.2,500.2 298.2,500.8 299.2,501.4 300.2,502.0 301.2,502.5 302.2,503.1 303.2,503.7 304.2,504.3 305.2,504.9 306.2,505.5 307.2,506.1 308.2,506.7 309.2,507.4 310.2,508.0 311.2,508.6 312.2,509.2 313.2,509.8 314.2,510.5 315.2,511.1 316.2,511.7 317.2,512.4 318.2,513.0 319.2,513.6 320.2,514.3 321.2,514.9 322.2,515.5 323.2,516.2 324.2,516.8 325.2,517.5 326.2,518.1 327.2,518.7 328.2,519.4 329.2,520.0 330.2,520.7 331.2,521.3 332.2,521.9 333.2,522.6 334.2,523.2 335.2,523.8 336.2,524.5 337.2,525.1 338.2,525.7 339.2,526.4 340.2,527.0 341.2,527.6 342.2,528.3 343.2,528.9 344.2,529.5 345.2,530.1 346.2,530.7 347.2,531.3 348.2,531.9 349.2,532.5 350.2,533.2 351.2,533.7 352.2,534.3 353.2,534.9 354.2,535.5 355.2,536.1 356.2,536.7 357.2,537.3 358.2,537.8 359.2,538.4 360.2,538.9 361.2,539.5 362.2,540.0 363.2,540.6 364.2,541.1 365.2,541.7 366.2,542.2 367.2,542.7 368.2,543.2 369.2,543.7 370.2,544.2 371.2,544.7 372.2,545.2 373.2,545.7 374.2,546.2 375.2,546.7 376.2,547.1 377.2,547.6 378.2,548.0 379.2,548.5 380.2,548.9 381.2,549.3 382.2,549.8 383.2,550.2 384.2,550.6 385.2,551.0 386.2,551.4 387.2,551.7 388.2,552.1 389.2,552.5 390.2,552.8 391.2,553.2 392.2,553.5 393.2,553.9 394.2,554.2 395.2,554.5 396.2,554.8 397.2,555.1 398.2,555.4 399.2,555.7 400.2,555.9 401.2,556.2 402.2,556.4 403.2,556.7 404.2,556.9 405.2,557.1 406.2,557.4 407.2,557.6 408.2,557.7 409.2,557.9 410.2,558.1 411.2,558.3 412.2,558.4 413.2,558.6 414.2,558.7 415.2,558.8 416.2,559.0 417.2,559.1 418.2,559.2 419.2,559.2 420.2,559.3 421.2,559.4 422.2,559.4 423.2,559.5 424.2,559.5 425.2,559.6 426.2,559.6 427.2,559.6 428.2,559.6 429.2,559.6 430.2,559.5 431.2,559.5 432.2,559.5 433.2,559.4 434.2,559.3 435.2,559.3 436.2,559.2 437.2,559.1 438.2,559.0 439.2,558.9 440.2,558.7 441.2,558.6 442.2,558.5 443.2,558.3 444.2,558.2 445.2,558.0 446.2,557.8 447.2,557.6 448.2,557.4 449.2,557.2 450.2,557.0 451.2,556.7 452.2,556.5 453.2,556.3 454.2,556.0 455.2,555.7 456.2,555.5 457.2,555.2 458.2,554.9 459.2,554.6 460.2,554.3 461.2,553.9 462.2,553.6 463.2,553.3 464.2,552.9 465.2,552.6 466.2,552.2 467.2,551.8 468.2,551.5 469.2,551.1 470.2,550.7 471.2,550.3 472.2,549.9 473.2,549.5 474.2,549.0 475.2,548.6 476.2,548.2 477.2,547.7 478.2,547.3 479.2,546.8 480.2,546.3 481.2,545.8 482.2,545.4 483.2,544.9 484.2,544.4 485.2,543.9 486.2,543.4 487.2,542.9 488.2,542.3 489.2,541.8 490.2,541.3 491.2,540.7 492.2,540.2 493.2,539.6 494.2,539.1 495.2,538.5 496.2,538.0 497.2,537.4 498.2,536.8 499.2,536.3 500.2,535.7 501.2,535.1 502.2,534.5 503.2,533.9 504.2,533.3 505.2,532.7 506.2,532.1 507.2,531.5 508.2,530.9 509.2,530.3 510.2,529.7 511.2,529.0 512.2,528.4 513.2,527.8 514.2,527.2 515.2,526.5 516.2,525.9 517.2,525.3 518.2,524.7 519.2,524.0 520.2,523.4 521.2,522.7 522.2,522.1 523.2,521.5 524.2,520.8 525.2,520.2 526.2,519.6 527.2,518.9 528.2,518.3 529.2,517.6 530.2,517.0 531.2,516.3 532.2,515.7 533.2,515.1 534.2,514.4 535.2,513.8 536.2,513.2 537.2,512.5 538.2,511.9 539.2,511.3 540.2,510.6 541.2,510.0 542.2,509.4 543.2,508.8 544.2,508.1 545.2,507.5 546.2,506.9 547.2,506.3 548.2,505.7 549.2,505.1 550.2,504.5 551.2,503.9 552.2,503.3 553.2,502.7 554.2,502.1 555.2,501.5 556.2,501.0 557.2,500.4 558.2,499.8 559.2,499.2 560.2,498.7 561.2,498.1 562.2,497.6 563.2,497.0 564.2,496.5 565.2,496.0 566.2,495.4 567.2,494.9 568.2,494.4 569.2,493.9 570.2,493.4 571.2,492.9 572.2,492.4 573.2,491.9 574.2,491.4 575.2,490.9 576.2,490.5 577.2,490.0 578.2,489.6 579.2,489.1 580.2,488.7 581.2,488.3 582.2,487.8 583.2,487.4 584.2,487.0 585.2,486.6 586.2,486.2 587.2,485.8 588.2,485.5 589.2,485.1 590.2,484.7 591.2,484.4 592.2,484.0 593.2,483.7 594.2,483.4 595.2,483.1 596.2,482.8 597.2,482.5 598.2,482.2 599.2,481.9 600.2,481.6 601.2,481.4 602.2,481.1 603.2,480.9 604.2,480.6 605.2,480.4 606.2,480.2 607.2,480.0 608.2,479.8 609.2,479.6 610.2,479.4 611.2,479.3 612.2,479.1 613.2,479.0 614.2,478.8 615.2,478.7 616.2,478.6 617.2,478.5 618.2,478.4 619.2,478.3 620.2,478.2 621.2,478.1 622.2,478.1 623.2,478.0 624.2,478.0 625.2,478.0 626.2,477.9 627.2,477.9 628.2,477.9 629.2,477.9 630.2,478.0 631.2,478.0 632.2,478.0 633.2,478.1 634.2,478.1 635.2,478.2 636.2,478.3 637.2,478.4 638.2,478.5 639.2,478.6 640.2,478.7 641.2,478.9 642.2,479.0 643.2,479.1 644.2,479.3 645.2,479.5 646.2,479.7 647.2,479.8 648.2,480.0 649.2,480.3 650.2,480.5 651.2,480.7 652.2,480.9 653.2,481.2 654.2,481.4 655.2,481.7 656.2,482.0 657.2,482.3 658.2,482.6 659.2,482.9 660.2,483.2 661.2,483.5 662.2,483.8 663.2,484.1 664.2,484.5 665.2,484.8 666.2,485.2 667.2,485.6 668.2,485.9 669.2,486.3 670.2,486.7 671.2,487.1 672.2,487.5 673.2,488.0 674.2,488.4 675.2,488.8 676.2,489.2 677.2,489.7 678.2,490.1 679.2,490.6 680.2,491.1 681.2,491.5 682.2,492.0 683.2,492.5 684.2,493.0 685.2,493.5 686.2,494.0 687.2,494.5 688.2,495.1 689.2,495.6 690.2,496.1 691.2,496.6 692.2,497.2 693.2,497.7 694.2,498.3 695.2,498.8 696.2,499.4 697.2,500.0 698.2,500.5 699.2,501.1 700.2,501.7 701.2,502.3 702.2,502.9 703.2,503.5 704.2,504.1 705.2,504.7 706.2,505.3 707.2,505.9 708.2,506.5 709.2,507.1 710.2,507.7 711.2,508.3 712.2,508.9 713.2,509.6 714.2,510.2 715.2,510.8 716.2,511.4 717.2,512.1 718.2,512.7 719.2,513.3 720.2,514.0 721.2,514.6 722.2,515.2 723.2,515.9 724.2,516.5 725.2,517.2 726.2,517.8 727.2,518.4 728.2,519.1 729.2,519.7 730.2,520.4 731.2,521.0 732.2,521.6 733.2,522.3 734.2,522.9 735.2,523.6 736.2,524.2 737.2,524.8 738.2,525.5 739.2,526.1 740.2,526.7 741.2,527.3 742.2,528.0 743.2,528.6 744.2,529.2 745.2,529.8 746.2,530.4 747.2,531.1 748.2,531.7 749.2,532.3 750.2,532.9 751.2,533.5 752.2,534.1 753.2,534.7 754.2,535.3 755.2,535.8 756.2,536.4 757.2,537.0 758.2,537.6 759.2,538.1 760.2,538.7 761.2,539.2 762.2,539.8 763.2,540.3 764.2,540.9 765.2,541.4 766.2,542.0 767.2,542.5 768.2,543.0 769.2,543.5 770.2,544.0 771.2,544.5 772.2,545.0 773.2,545.5 774.2,546.0 775.2,546.4 776.2,546.9 777.2,547.4 778.2,547.8 779.2,548.3 780.2,548.7 781.2,549.1 782.2,549.6 783.2,550.0 784.2,550.4 785.2,550.8 786.2,551.2 787.2,551.6 788.2,551.9 789.2,552.3 790.2,552.7 791.2,553.0 792.2,553.4 793.2,553.7 794.2,554.0 795.2,554.4 796.2,554.7 797.2,555.0 798.2,555.3 799.2,555.5 800.2,555.8 801.2,556.1 802.2,556.3 803.2,556.6 804.2,556.8 805.2,557.0 806.2,557.3 807.2,557.5 808.2,557.7 809.2,557.9 810.2,558.0 811.2,558.2 812.2,558.4 813.2,558.5 814.2,558.7 815.2,558.8 816.2,558.9 817.2,559.0 818.2,559.1 819.2,559.2 820.2,559.3 821.2,559.4 822.2,559.4 823.2,559.5 824.2,559.5 825.2,559.5 826.2,559.6 827.2,559.6 828.2,559.6 829.2,559.6 830.2,559.5 831.2,559.5 832.2,559.5 833.2,559.4 834.2,559.4 835.2,559.3 836.2,559.2 837.2,559.1 838.2,559.0 839.2,558.9 840.2,558.8 841.2,558.7 842.2,558.5 843.2,558.4 844.2,558.2 845.2,558.1 846.2,557.9 847.2,557.7 848.2,557.5 849.2,557.3 850.2,557.1 851.2,556.9 852.2,556.6 853.2,556.4 854.2,556.1 855.2,555.9 856.2,555.6 857.2,555.3 858.2,555.0 859.2,554.7 860.2,554.4 861.2,554.1 862.2,553.8 863.2,553.4 864.2,553.1 865.2,552.7 866.2,552.4 867.2,552.0 868.2,551.6 869.2,551.3 870.2,550.9 871.2,550.5 872.2,550.1 873.2,549.6 874.2,549.2 875.2,548.8 876.2,548.4 877.2,547.9 878.2,547.5 879.2,547.0 880.2,546.5 881.2,546.1 882.2,545.6 883.2,545.1 884.2,544.6 885.2,544.1 886.2,543.6 887.2,543.1 888.2,542.6 889.2,542.0 890.2,541.5 891.2,541.0 892.2,540.4 893.2,539.9 894.2,539.3 895.2,538.8 896.2,538.2 897.2,537.7 898.2,537.1 899.2,536.5 900.2,535.9 901.2,535.4 902.2,534.8 903.2,534.2 904.2,533.6 905.2,533.0 906.2,532.4 907.2,531.8 908.2,531.2 909.2,530.6 910.2,529.9 911.2,529.3 912.2,528.7 913.2,528.1 914.2,527.5 915.2,526.8 916.2,526.2 917.2,525.6 918.2,524.9 919.2,524.3 920.2,523.7 921.2,523.0 922.2,522.4 923.2,521.8 924.2,521.1 925.2,520.5 926.2,519.8 927.2,519.2 928.2,518.6 929.2,517.9 930.2,517.3 931.2,516.6 932.2,516.0 933.2,515.4 934.2,514.7 935.2,514.1 936.2,513.4 937.2,512.8 938.2,512.2 939.2,511.5 940.2,510.9 941.2,510.3 942.2,509.7 943.2,509.0 944.2,508.4 945.2,507.8 946.2,507.2 947.2,506.6 948.2,506.0 949.2,505.4 950.2,504.8 951.2,504.2 952.2,503.6 953.2,503.0 954.2,502.4 955.2,501.8 956.2,501.2 957.2,500.6 958.2,500.1 959.2,499.5 960.2,498.9 961.2,498.4 962.2,497.8 963.2,497.3 964.2,496.7 965.2,496.2 966.2,495.7 967.2,495.1 968.2,494.6 969.2,494.1 970.2,493.6 971.2,493.1 972.2,492.6 973.2,492.1 974.2,491.6 975.2,491.2 976.2,490.7 977.2,490.2 978.2,489.8 979.2,489.3 980.2,488.9 981.2,488.5 982.2,488.0 983.2,487.6 984.2,487.2 985.2,486.8 986.2,486.4 987.2,486.0 988.2,485.6 989.2,485.3 990.2,484.9 991.2,484.5 992.2,484.2 993.2,483.9 994.2,483.5 995.2,483.2 996.2,482.9 997.2,482.6 998.2,482.3 999.2,482.0 1000.2,481.8 1001.2,481.5 1002.2,481.2 1003.2,481.0 1004.2,480.7 1005.2,480.5 1006.2,480.3 1007.2,480.1 1008.2,479.9 1009.2,479.7 1010.2,479.5 1011.2,479.3 1012.2,479.2 1013.2,479.0 1014.2,478.9 1015.2,478.7 1016.2,478.6 1017.2,478.5 1018.2,478.4 1019.2,478.3 1020.2,478.2 1021.2,478.2 1022.2,478.1 1023.2,478.0 1024.2,478.0"/>
</g><g font-family="Liberation Sans, sans-serif" font-size="9.5" fill="#f0f0f0" stroke="#f0f0f0" stroke-width="0.12" text-anchor="end"><text x="32.0" y="710.0" textLength="53.4" lengthAdjust="spacingAndGlyphs">4:16:09 PM</text><text x="31.2" y="719.8" textLength="41.2" lengthAdjust="spacingAndGlyphs">7/9/2007</text><text x="132.1" y="710.0" textLength="53.4" lengthAdjust="spacingAndGlyphs">4:17:49 PM</text><text x="131.3" y="719.8" textLength="41.2" lengthAdjust="spacingAndGlyphs">7/9/2007</text><text x="232.2" y="710.0" textLength="53.4" lengthAdjust="spacingAndGlyphs">4:19:29 PM</text><text x="231.4" y="719.8" textLength="41.2" lengthAdjust="spacingAndGlyphs">7/9/2007</text><text x="332.3" y="710.0" textLength="53.4" lengthAdjust="spacingAndGlyphs">4:21:09 PM</text><text x="331.5" y="719.8" textLength="41.2" lengthAdjust="spacingAndGlyphs">7/9/2007</text><text x="432.4" y="710.0" textLength="53.4" lengthAdjust="spacingAndGlyphs">4:22:49 PM</text><text x="431.6" y="719.8" textLength="41.2" lengthAdjust="spacingAndGlyphs">7/9/2007</text><text x="532.6" y="710.0" textLength="53.4" lengthAdjust="spacingAndGlyphs">4:24:29 PM</text><text x="531.8" y="719.8" textLength="41.2" lengthAdjust="spacingAndGlyphs">7/9/2007</text><text x="632.7" y="710.0" textLength="53.4" lengthAdjust="spacingAndGlyphs">4:26:09 PM</text><text x="631.9" y="719.8" textLength="41.2" lengthAdjust="spacingAndGlyphs">7/9/2007</text><text x="732.8" y="710.0" textLength="53.4" lengthAdjust="spacingAndGlyphs">4:27:49 PM</text><text x="732.0" y="719.8" textLength="41.2" lengthAdjust="spacingAndGlyphs">7/9/2007</text><text x="832.9" y="710.0" textLength="53.4" lengthAdjust="spacingAndGlyphs">4:29:29 PM</text><text x="832.1" y="719.8" textLength="41.2" lengthAdjust="spacingAndGlyphs">7/9/2007</text><text x="933.0" y="710.0" textLength="53.4" lengthAdjust="spacingAndGlyphs">4:31:09 PM</text><text x="932.2" y="719.8" textLength="41.2" lengthAdjust="spacingAndGlyphs">7/9/2007</text></g></g>
<rect x="0" y="280" width="1" height="483" fill="#9c9a8c"/>
<rect x="1022.6" y="280" width="1.4" height="483" fill="#c8c4b2"/>
</svg>
<svg width="1024" height="47" viewBox="0 234 1024 47" style="position:absolute;left:0;top:234px;display:block" font-family="Liberation Sans, sans-serif">
<defs>
<linearGradient id="tbg" x1="0" y1="0" x2="0" y2="1"><stop offset="0" stop-color="#fefefe"/><stop offset="0.35" stop-color="#f7f7f7"/><stop offset="0.75" stop-color="#e6e6e6"/><stop offset="1" stop-color="#d2d2d2"/></linearGradient>
<linearGradient id="shd" x1="0" y1="0" x2="1" y2="0"><stop offset="0" stop-color="#b0b0b0" stop-opacity="0"/><stop offset="1" stop-color="#a8a8a8" stop-opacity="0.9"/></linearGradient>
<linearGradient id="fold" x1="0" y1="0" x2="0" y2="1"><stop offset="0" stop-color="#fbdc74"/><stop offset="1" stop-color="#eca62c"/></linearGradient>
<linearGradient id="doc" x1="0" y1="0" x2="1" y2="1"><stop offset="0" stop-color="#d8e4fa"/><stop offset="1" stop-color="#ffffff"/></linearGradient>
<linearGradient id="mon" x1="0" y1="0" x2="0" y2="1"><stop offset="0" stop-color="#a8a8a8"/><stop offset="1" stop-color="#505050"/></linearGradient>
<filter id="b3" x="-5%" y="-20%" width="110%" height="140%"><feConvolveMatrix order="3" kernelMatrix="1 3 1 3 12 3 1 3 1" divisor="28" edgeMode="none" preserveAlpha="false"/></filter>
<filter id="b2" x="-20%" y="-20%" width="140%" height="140%"><feGaussianBlur stdDeviation="0.22"/></filter>
<filter id="b5" x="-20%" y="-20%" width="140%" height="140%"><feGaussianBlur stdDeviation="0.5"/></filter>
</defs>
<rect x="0" y="235" width="1024" height="1.05" fill="#fff"/>
<rect x="0" y="236" width="1024" height="1.1" fill="#000"/>
<rect x="0" y="237.05" width="1024" height="12.1" fill="#f3f3f3"/>
<rect x="0" y="249.1" width="1024" height="11" fill="#ffffff"/>
<rect x="0" y="260" width="1024" height="19.9" fill="#f0f0f0"/>
<rect x="0" y="260" width="529.3" height="19.9" fill="url(#tbg)"/>
<rect x="527" y="260.5" width="2.3" height="19" fill="url(#shd)" opacity="0.55"/>
<rect x="0" y="262" width="0.9" height="16" fill="#c4c4c4"/>
<rect x="39" y="260.5" width="2.3" height="19" fill="url(#shd)" opacity="0.8"/>
<rect x="41.3" y="260" width="2.2" height="19.9" fill="#f6f6f6" opacity="0.7"/>
<rect x="43.75" y="262.2" width="1.1" height="15.8" fill="#9c9c9c"/>
<rect x="119.2" y="260.5" width="2.3" height="19" fill="url(#shd)" opacity="0.8"/>
<rect x="121.5" y="260" width="2.2" height="19.9" fill="#f6f6f6" opacity="0.7"/>
<rect x="123.6" y="262.2" width="1.1" height="15.8" fill="#9c9c9c"/>
<rect x="200" y="260.5" width="2.3" height="19" fill="url(#shd)" opacity="0.8"/>
<rect x="202.3" y="260" width="2.2" height="19.9" fill="#f6f6f6" opacity="0.7"/>
<rect x="204.3" y="262.2" width="1.1" height="15.8" fill="#9c9c9c"/>
<rect x="262.5" y="260.5" width="2.3" height="19" fill="url(#shd)" opacity="0.8"/>
<rect x="264.8" y="260" width="2.2" height="19.9" fill="#f6f6f6" opacity="0.7"/>
<rect x="267.2" y="262.2" width="1.1" height="15.8" fill="#a4a4a4"/>
<rect x="308.6" y="260.5" width="2.3" height="19" fill="url(#shd)" opacity="0.8"/>
<rect x="310.9" y="260" width="2.2" height="19.9" fill="#f6f6f6" opacity="0.7"/>
<rect x="312.4" y="262.2" width="1.1" height="15.8" fill="#acacac"/>
<rect x="406.9" y="260.5" width="2.3" height="19" fill="url(#shd)" opacity="0.8"/>
<rect x="409.2" y="260" width="2.2" height="19.9" fill="#f6f6f6" opacity="0.7"/>
<rect x="412.2" y="262.2" width="1.1" height="15.8" fill="#acacac"/>
<rect x="500.3" y="260.5" width="2.3" height="19" fill="url(#shd)" opacity="0.8"/>
<rect x="502.6" y="260" width="2.2" height="19.9" fill="#f6f6f6" opacity="0.7"/>
<rect x="504.2" y="262.2" width="1.1" height="15.8" fill="#a0a0a0"/>
<g filter="url(#b3)"><path d="M4.5,239 C6,237.4 9.4,237.8 9.8,240.6 C10.2,243 8.6,244.6 7.4,246 C6.6,247 5,247.2 3.6,246.8 C2.4,246.6 1.6,245 1.2,243 C0.6,240.6 1.4,238.4 2.6,238.3 C3.4,238.2 4,238.5 4.5,239Z" fill="#111"/><ellipse cx="2.7" cy="240.4" rx="0.8" ry="1.3" fill="#fff" transform="rotate(-12 2.7 240.4)"/><ellipse cx="3.7" cy="243.8" rx="0.7" ry="1.4" fill="#fff" transform="rotate(-8 3.7 243.8)"/><path d="M6.2,239.6 q1.6,-0.6 2,2.6" stroke="#9a9a9a" stroke-width="0.6" fill="none"/><path d="M5,241.4 l1.6,-1.6" stroke="#777" stroke-width="0.5"/><circle cx="6.4" cy="245.4" r="0.85" fill="#c8c81c"/><circle cx="5.9" cy="244.4" r="0.55" fill="#f4f4f4"/></g>
<g filter="url(#b2)" fill="#808080" font-size="6.4"><text x="12.4" y="245.5" textLength="111" lengthAdjust="spacingAndGlyphs">Display real-time measured value from:</text><text x="124.6" y="245.6" font-size="6.1" textLength="125.5" lengthAdjust="spacingAndGlyphs" fill="#7a7a7a">C:\Observer II\Real Time\DAS.PRJ - [Trend-Page1]</text></g>
<g stroke="#8a8a8a" stroke-width="0.7" fill="none"><path d="M959.6,242.5 h5.2"/><rect x="983.6" y="240.8" width="3.8" height="3.8" rx="0.4"/><path d="M984.8,240.8 v-1 h3.8 v3.8 h-1"/><path d="M1008.2,239.8 l5.2,5.2 M1013.4,239.8 l-5.2,5.2"/></g>
<g filter="url(#b2)" fill="#6e6e6e" font-size="6.3"><text x="3.9" y="256.7" textLength="17.4" lengthAdjust="spacingAndGlyphs">File(F)</text><text x="28.8" y="256.7" textLength="22.4" lengthAdjust="spacingAndGlyphs">View(V)</text><text x="59.3" y="256.7" textLength="23.2" lengthAdjust="spacingAndGlyphs">Page(P)</text><text x="90.1" y="256.7" textLength="35.6" lengthAdjust="spacingAndGlyphs">Window(W)</text><text x="133.3" y="256.7" textLength="38" lengthAdjust="spacingAndGlyphs">Language(L)</text><text x="178.4" y="256.7" textLength="23.6" lengthAdjust="spacingAndGlyphs">Help(H)</text></g>
<g filter="url(#b3)">
<path d="M8.4,265.3 h5.4 l3,3 v8.3 h-8.4z" fill="url(#doc)" stroke="#a4a4dc" stroke-width="0.8"/><path d="M13.8,265.3 v3 h3z" fill="#8088a0"/>
<path d="M23.5,269 q0,-1.2 1,-1.2 h3 l1,1.1 h6.8 q1,0 1,1 v5.8 q0,0.9 -1,0.9 h-10.8 q-1,0 -1,-0.9z" fill="#dc9c24"/><path d="M23.2,276.4 l1.7,-5.2 q0.2,-0.6 1,-0.6 h10.4 q0.8,0 0.6,0.7 l-1.6,5.2 q-0.2,0.5 -0.8,0.5 h-10.6 q-0.8,0 -0.7,-0.6z" fill="url(#fold)"/><path d="M27.4,265.2 c3.6,-0.8 5.6,1.4 6.2,4.2" fill="none" stroke="#1c8c30" stroke-width="2"/><path d="M30.6,268.8 l6,-0.6 l-3,4.2z" fill="#1c8c30"/>
<path d="M52.2,265.7 h6 l2.6,2.6 v8 h-8.6z" fill="#fff" stroke="#141414" stroke-width="1.5" stroke-linejoin="round"/><rect x="53" y="266.1" width="5.8" height="1.3" fill="#e03434"/><path d="M58.2,265.7 v2.6 h2.6" fill="none" stroke="#222" stroke-width="0.8"/><path d="M56.2,274.2 V270.3 H59.3 V273.4" fill="none" stroke="#111" stroke-width="0.8"/><ellipse cx="55.5" cy="274.3" rx="1" ry="0.75" fill="#111"/><ellipse cx="58.6" cy="273.6" rx="1" ry="0.75" fill="#111"/>
<polygon points="79.98,271.81 79.64,272.86 77.68,272.93 77.16,273.53 77.46,275.37 76.44,275.89 75.00,274.62 74.18,274.69 73.03,276.19 71.92,275.87 71.85,274.01 71.22,273.51 69.28,273.80 68.74,272.83 70.08,271.46 70.00,270.69 68.42,269.59 68.76,268.54 70.72,268.47 71.24,267.87 70.94,266.03 71.96,265.51 73.40,266.78 74.22,266.71 75.37,265.21 76.48,265.53 76.55,267.39 77.18,267.89 79.12,267.60 79.66,268.57 78.32,269.94 78.40,270.71" fill="#343434" stroke="#343434" stroke-width="0.6" stroke-linejoin="round"/><circle cx="74.2" cy="270.7" r="1.6" fill="#6c6c6c"/><path d="M71.6,273.6 l4.6,-5.6 M70.4,269.6 l3,-0.4 M76.6,272.6 l1.8,1" stroke="#a8a8a8" stroke-width="0.7"/>
<rect x="86" y="265.3" width="11" height="2.2" fill="url(#mon)"/><rect x="86" y="267.3" width="11" height="6.8" fill="#101010"/><rect x="87.2" y="269.3" width="2.4" height="3.2" fill="#0e6420"/><rect x="90.2" y="269.3" width="2.4" height="3.2" fill="#0e6420"/><rect x="93.2" y="269.3" width="2.6" height="3.2" fill="#0e6420"/><path d="M86.6,274 l-1.2,1.2 M96.4,274 l1.2,1.2" stroke="#555" stroke-width="0.9"/>
<rect x="103.3" y="265.5" width="12.2" height="11.4" rx="0.8" fill="#24248c" stroke="#4848a8" stroke-width="0.6"/><rect x="103.6" y="265.8" width="11.6" height="2.2" fill="#14146c"/><rect x="105" y="268.9" width="3.6" height="1.7" fill="#fff"/><rect x="110" y="268.9" width="4" height="1.7" fill="#fff"/><rect x="105" y="272.8" width="3.6" height="3" fill="#fff"/><rect x="110" y="272.8" width="4" height="3" fill="#fff"/>
<rect x="132.5" y="265.3" width="10" height="11.4" rx="0.8" fill="#fff" stroke="#3a3a3a" stroke-width="1.3"/><rect x="141.4" y="265.3" width="1.4" height="11.4" fill="#3a3a3a"/><rect x="133.1" y="266" width="1.6" height="10" fill="#22a0a0"/><rect x="136.6" y="266" width="4.6" height="10" fill="#c4f0f8"/><path d="M135.7,266 v10" stroke="#f06060" stroke-width="0.8" stroke-dasharray="1.2 0.8"/><path d="M136.6,268.5 h4.6 M136.6,271 h4.6 M136.6,273.5 h4.6" stroke="#90d8e4" stroke-width="0.5"/>
<rect x="148.2" y="265" width="12.7" height="11.8" rx="0.6" fill="#14145e" stroke="#5c5cc0" stroke-width="0.5"/><g font-size="8.2" font-weight="bold" stroke-width="0.6"><text x="149.2" y="274.2" fill="#9a38d0" stroke="#9a38d0" textLength="2.8" lengthAdjust="spacingAndGlyphs">1</text><text x="152" y="274.2" fill="#26a826" stroke="#26a826" textLength="4.1" lengthAdjust="spacingAndGlyphs">2</text><text x="156.1" y="274.2" fill="#a8a826" stroke="#a8a826" textLength="4.1" lengthAdjust="spacingAndGlyphs">3</text></g>
<rect x="167.6" y="265.4" width="10.6" height="9.8" fill="#b8b8b8"/><path d="M170.6,265.4 v9.6 M173.1,265.4 v9.6 M175.6,265.4 v9.6 M178.1,265.4 v9.6" stroke="#6a6a6a" stroke-width="0.5"/><path d="M167.3,265.2 v10.2 h10.9" stroke="#222" stroke-width="1" fill="none"/><rect x="168.1" y="268.2" width="2.3" height="6.8" fill="#e42020"/><rect x="170.8" y="266.2" width="2.2" height="8.8" fill="#2444d4"/><rect x="173.3" y="269.2" width="2.2" height="5.8" fill="#44c424"/><rect x="175.8" y="267.4" width="2.2" height="7.6" fill="#c434c4"/><path d="M165.5,266.5 h1.2 M165.5,269 h1.2 M165.5,271.5 h1.2 M165.5,274 h1.2 M168.4,276.4 h1.4 M171,276.4 h1.4 M173.6,276.4 h1.4 M176.2,276.4 h1.4" stroke="#7a7a7a" stroke-width="0.8"/>
<rect x="184.6" y="265.8" width="10.6" height="8.6" fill="#ececec"/><path d="M184.4,275 V265.9 H195.3" stroke="#8c8c8c" stroke-width="0.9" fill="none"/><path d="M185.2,273 l2.4,-2.8 l2,1.6 l3.6,-4.4" stroke="#e42424" stroke-width="1.4" fill="none"/><path d="M185.4,267.6 l2.8,4.6 l1.8,-2.2 l1.2,1.8 l3.4,-4.6" stroke="#3444c4" stroke-width="1.5" fill="none"/><rect x="184.4" y="274" width="11" height="1.7" fill="#1c1c1c"/><path d="M185.5,275.8 v0.9 M187.7,275.8 v0.9 M189.9,275.8 v0.9 M192.1,275.8 v0.9 M194.3,275.8 v0.9" stroke="#555" stroke-width="0.7"/>
<rect x="210.2" y="265" width="13" height="11.1" fill="#cdeed6"/><rect x="210.2" y="265" width="13" height="2.2" fill="#1f9440"/><rect x="210.2" y="268" width="13" height="2.3" fill="#3aa458"/><rect x="210.2" y="271" width="13" height="2.2" fill="#1f9440"/><rect x="210.2" y="274" width="13" height="2.1" fill="#1f9440"/><path d="M213.6,265 v11 M216.9,265 v11 M220.1,265 v11" stroke="#8fd4a0" stroke-width="0.5"/><rect x="210.3" y="264.9" width="3.2" height="2.4" rx="0.8" fill="#f22424"/><rect x="216.8" y="267.9" width="3.3" height="2.4" rx="0.8" fill="#f25050"/><rect x="213.8" y="273.9" width="3.2" height="2.3" fill="#f22424"/><rect x="220" y="273.9" width="3.2" height="2.3" fill="#f22424"/>
<rect x="228" y="265.4" width="13" height="11.3" fill="#e2e2e2"/><g stroke="#3c3c3c" stroke-width="0.8"><path d="M228,270.4 h13 M228,272.8 h13 M228,275 h13 M228,276.6 h13 M228.4,266 v11 M233.8,266 v11 M236.4,266 v11 M239,266 v11 M240.8,266 v11"/></g><rect x="228" y="266.8" width="13" height="1.8" fill="#141414"/><rect x="230.1" y="265" width="1.6" height="11.8" fill="#141414"/>
<path d="M246.5,265.2 h6.5 q5,1 5,6 q-0.4,4.6 -5,5.3 h-3.5 q-3,-0.6 -3,-3z" fill="#828282"/><circle cx="253.6" cy="267.2" r="0.7" fill="#c8c8c8"/><circle cx="249.2" cy="274.4" r="0.6" fill="#bcbcbc"/>
<g fill="none" stroke="#a2a2a2" stroke-width="0.8"><rect x="274.4" y="270.8" width="2.8" height="5.6"/><rect x="278.2" y="267.6" width="2.6" height="6"/><rect x="281.8" y="268.4" width="2.4" height="5.2"/></g><rect x="277.6" y="266" width="3.8" height="1.7" rx="0.8" fill="#8c8c8c"/><rect x="282.2" y="269" width="1.6" height="3.6" fill="#b4b4b4"/>
<rect x="294" y="265.6" width="7" height="9.6" rx="0.9" fill="#1f1f1f"/><rect x="295.2" y="269.4" width="1.5" height="1.4" fill="#e44848"/><rect x="295.2" y="267.4" width="4.6" height="0.8" fill="#3c4c9c"/><rect x="297.4" y="269.6" width="2.4" height="0.9" fill="#34448c"/><path d="M295.2,273 q2.3,-1.2 4.6,0" stroke="#9c9c9c" stroke-width="0.7" fill="none"/>
<path d="M418.6,269.8 l5.2,-4.2 q1.4,-0.8 2.2,0.6 l0.8,1.8 l-5.6,3.8 q-1.6,0.4 -2.6,-2z" fill="#8a8a8a"/><path d="M425.8,267 q3,-2 3.8,0.8 l0.2,2.8 h-4.6z" fill="#989898"/><path d="M422.6,270.4 h6.8 l-1,2.4 h-4.8z" fill="#a4a4a4"/><path d="M421.6,276.6 l2.3,-3.6 l2.3,3.6z" fill="#8a8a8a"/><rect x="427.6" y="273.2" width="3.6" height="3.4" fill="#8a8a8a"/><circle cx="426.4" cy="272.2" r="0.9" fill="#9a9a9a"/><circle cx="422" cy="268.4" r="0.7" fill="#d8d8d8"/>
<rect x="521.2" y="265.6" width="2.2" height="1.8" rx="0.6" fill="#a4a4a4"/><rect x="521.2" y="273.2" width="2.2" height="1.8" rx="0.6" fill="#a4a4a4"/><path d="M511.9,270.2 l4.4,-5 q1.4,-0.8 2.8,0 q2.8,1.4 2.8,5 q0,3.6 -2.8,5 q-1.4,0.8 -2.8,0z" fill="#1a1410" stroke="#e42424" stroke-width="1.3"/><path d="M514.2,271.8 l2.2,-5.2 l0.6,5.2z" fill="#dcdc1c"/><path d="M516.8,274.6 l1.8,-5.4 l0.9,5.4z" fill="#e8e81c"/><path d="M517.4,267.4 l2.4,-1.2 l-1.6,4.8z" fill="#e8801c"/><path d="M514.4,273.4 l1.4,-1 l0.6,2z" fill="#e85c1c"/><path d="M519.8,268 l1,1.6 l-0.8,3z" fill="#d83c2c"/>
</g>
<g filter="url(#b2)"><text x="321.2" y="275.7" font-family="Liberation Serif, serif" font-size="15" fill="#0a0a0a" stroke="#0a0a0a" stroke-width="0.5" textLength="10.8" lengthAdjust="spacingAndGlyphs">R</text></g>
<rect x="334.6" y="262.2" width="68.4" height="14" fill="#fff"/><path d="M335,276.2 V262.7 H403" fill="none" stroke="#727272" stroke-width="1.3"/><path d="M336,275.4 V263.7 H402" fill="none" stroke="#5a5a5a" stroke-width="0.8" opacity="0.75"/><path d="M402.6,262.8 V276" stroke="#7c7c7c" stroke-width="1.3"/><rect x="336.7" y="264.2" width="52.6" height="10.8" fill="#2a6ac8"/><rect x="336.9" y="264.4" width="52.2" height="10.4" fill="none" stroke="#d8a868" stroke-width="0.7" stroke-dasharray="0.9 0.9"/><text x="338.6" y="272.6" font-size="7.3" fill="#b4d0f4" textLength="43.6" lengthAdjust="spacingAndGlyphs">PR Recorder</text><rect x="390.8" y="263.6" width="11" height="11.6" fill="#fbfbfb"/><path d="M390.8,275 H402" stroke="#7a7a7a" stroke-width="1.2"/><path d="M394.1,268.6 h5 l-2.5,2.5z" fill="#111"/>
<rect x="434.2" y="262.2" width="63.8" height="14" fill="#fff"/><path d="M434.6,276.2 V262.8 H497.9" fill="none" stroke="#747474" stroke-width="1.3"/><rect x="484.6" y="263.6" width="11.6" height="11.4" fill="#f2f2f2"/><path d="M497,262.4 V276 M484.4,275.3 H497.8" stroke="#747474" stroke-width="1.5" fill="none"/><path d="M488.6,268.8 h4.8 l-2.4,2.3z" fill="#858585"/>
<rect x="903" y="260.2" width="121" height="19.7" fill="#fdfdfd"/><rect x="903" y="262" width="3" height="17" fill="url(#shd)" opacity="0.5"/><rect x="906.1" y="262.2" width="1.6" height="16.5" fill="#b4b4b4"/><rect x="905" y="276.7" width="119" height="3.2" fill="#c9c9c9"/><rect x="912.2" y="262.8" width="16.6" height="13.5" fill="#b2b2b2"/><rect x="930.3" y="263.2" width="92.6" height="13.5" fill="#3f9090"/>
<g filter="url(#b3)"><path d="M916.6,272.4 q1.7,-0.8 1.9,-3 q0.2,-3.3 2.5,-3.6 q2.3,0.3 2.5,3.6 q0.2,2.2 1.9,3 v0.3 h-8.8z" fill="#fff" stroke="#0c0c0c" stroke-width="1.45" stroke-linejoin="round"/><circle cx="921" cy="265.2" r="0.9" fill="#0c0c0c"/><path d="M919.9,273.4 q1.1,1.5 2.2,0z" fill="#0c0c0c" stroke="#0c0c0c" stroke-width="0.6"/></g>
<g filter="url(#b2)"><text x="956.2" y="274.6" font-family="Liberation Serif, serif" font-weight="bold" font-size="12.2" fill="#0e2626" textLength="42.6" lengthAdjust="spacingAndGlyphs">10:36:20</text></g>
<rect x="0" y="279.6" width="1024" height="0.5" fill="#b0b0b0" opacity="0.6"/>
</svg>
<svg width="1024" height="30" viewBox="0 762 1024 30" style="position:absolute;left:0;top:762px;display:block" font-family="Liberation Sans, sans-serif">
<defs><filter id="c3" x="-20%" y="-20%" width="140%" height="140%"><feGaussianBlur stdDeviation="0.3"/></filter><clipPath id="tabclip"><rect x="0" y="762" width="1024" height="13.2"/></clipPath></defs>
<rect x="0" y="762.8" width="1024" height="20" fill="#d6d2c3"/>
<rect x="0" y="765.1" width="1024" height="18" fill="#aca899"/>
<rect x="0" y="762.8" width="1" height="13" fill="#a4a294"/>
<g clip-path="url(#tabclip)"><g filter="url(#c3)">
<rect x="1.2" y="765.2" width="28.4" height="11" fill="#7a786a"/><rect x="2.6" y="766.5" width="27" height="10" fill="#f6f4ea"/>
<ellipse cx="17.5" cy="775.6" rx="5" ry="1.9" fill="#a4a430"/><rect x="10.5" y="774.4" width="6" height="1.2" fill="#b0b0a8"/><rect x="19" y="774.3" width="6.4" height="1.5" fill="#3c4c4c"/>
<rect x="29.6" y="765.4" width="28.6" height="11" fill="#ece9d8"/><rect x="29.6" y="765.4" width="28.6" height="1" fill="#fbfaf4"/><rect x="29.6" y="765.4" width="1.2" height="11" fill="#fbfaf4"/>
<path d="M41.6,769.4 h9.2 l-1,2.6 h-7.2z" fill="#1a1a1a"/><path d="M42.4,770.4 h6.6 l-0.8,2.6 h-5.2z" fill="#1c98a4"/><path d="M41.2,775.6 q0.6,-2.6 2,-2.8 h4.8 q1.2,0.4 1.8,2.8z" fill="#e8d848"/><path d="M49.4,769.2 l1.4,0.4 l-1.6,3.4" stroke="#6c5c14" stroke-width="0.8" fill="none"/>
<rect x="58.4" y="765.2" width="28.8" height="11" fill="#6e6c5e"/><rect x="60.4" y="766.6" width="26.6" height="10" fill="#fcfbf5"/>
<rect x="67.6" y="770.1" width="15.4" height="6" fill="#0c0c0c"/><text x="71.6" y="781.6" font-size="12" font-weight="bold" fill="#fff" textLength="8.4" lengthAdjust="spacingAndGlyphs">R</text>
<rect x="87" y="765.5" width="29" height="11" fill="#ece9d8"/><rect x="87" y="765.5" width="29" height="1" fill="#fdfcf8"/><rect x="115.8" y="765.4" width="1.5" height="11" fill="#7e7c6e"/>
<rect x="94.3" y="769.7" width="16.4" height="7" fill="#fbfaf6"/><text x="96.2" y="782.3" font-size="14.4" font-weight="bold" fill="#0a0a0a" textLength="13.8" lengthAdjust="spacingAndGlyphs">W</text>
</g>
<text x="239.6" y="778.6" font-size="10.5" font-weight="bold" fill="#1010f4" textLength="14" lengthAdjust="spacingAndGlyphs" filter="url(#c3)">AI1</text>
<text x="369.2" y="778.6" font-size="10.5" font-weight="bold" fill="#10e410" textLength="14" lengthAdjust="spacingAndGlyphs" filter="url(#c3)">AI2</text>
<text x="498" y="778.6" font-size="10.5" font-weight="bold" fill="#10d8d8" textLength="14" lengthAdjust="spacingAndGlyphs" filter="url(#c3)">AI3</text>
<text x="627" y="778.6" font-size="10.5" font-weight="bold" fill="#e41010" textLength="14" lengthAdjust="spacingAndGlyphs" filter="url(#c3)">AI4</text>
<text x="756" y="778.6" font-size="10.5" font-weight="bold" fill="#e410e4" textLength="14" lengthAdjust="spacingAndGlyphs" filter="url(#c3)">AI5</text>
<text x="885" y="778.6" font-size="10.5" font-weight="bold" fill="#dcdc10" textLength="14" lengthAdjust="spacingAndGlyphs" filter="url(#c3)">AI6</text>
</g>
<rect x="0" y="775.3" width="1024" height="14" fill="#f0f0f0"/><rect x="0" y="776.6" width="1024" height="1.2" fill="#dadada"/>
<rect x="0" y="785.8" width="1024" height="4" fill="#fff"/>
<rect x="0" y="787.2" width="1024" height="5" fill="#000"/>
<rect x="0" y="788.85" width="1024" height="1.05" fill="#b8b8b8"/>
<rect x="106" y="776" width="1.3" height="10" fill="#fcfcfc"/><rect x="107.3" y="777" width="1.3" height="9" fill="#d6d6d6"/><rect x="108.6" y="777" width="1" height="9" fill="#fafafa"/>
<rect x="266" y="776" width="1.3" height="10" fill="#fcfcfc"/><rect x="267.3" y="777" width="1.3" height="9" fill="#d6d6d6"/><rect x="268.6" y="777" width="1" height="9" fill="#fafafa"/>
<rect x="426.2" y="776" width="1.3" height="10" fill="#fcfcfc"/><rect x="427.5" y="777" width="1.3" height="9" fill="#d6d6d6"/><rect x="428.8" y="777" width="1" height="9" fill="#fafafa"/>
<g font-size="7.5" fill="#2c2c34"><text x="1.2" y="784.7" textLength="15.2" lengthAdjust="spacingAndGlyphs">Page</text><text x="109" y="784.7" textLength="43.2" lengthAdjust="spacingAndGlyphs">Sampling Rate</text><text x="269.2" y="784.7" textLength="30.6" lengthAdjust="spacingAndGlyphs">Scan Time</text></g>
</svg>
</body></html>
